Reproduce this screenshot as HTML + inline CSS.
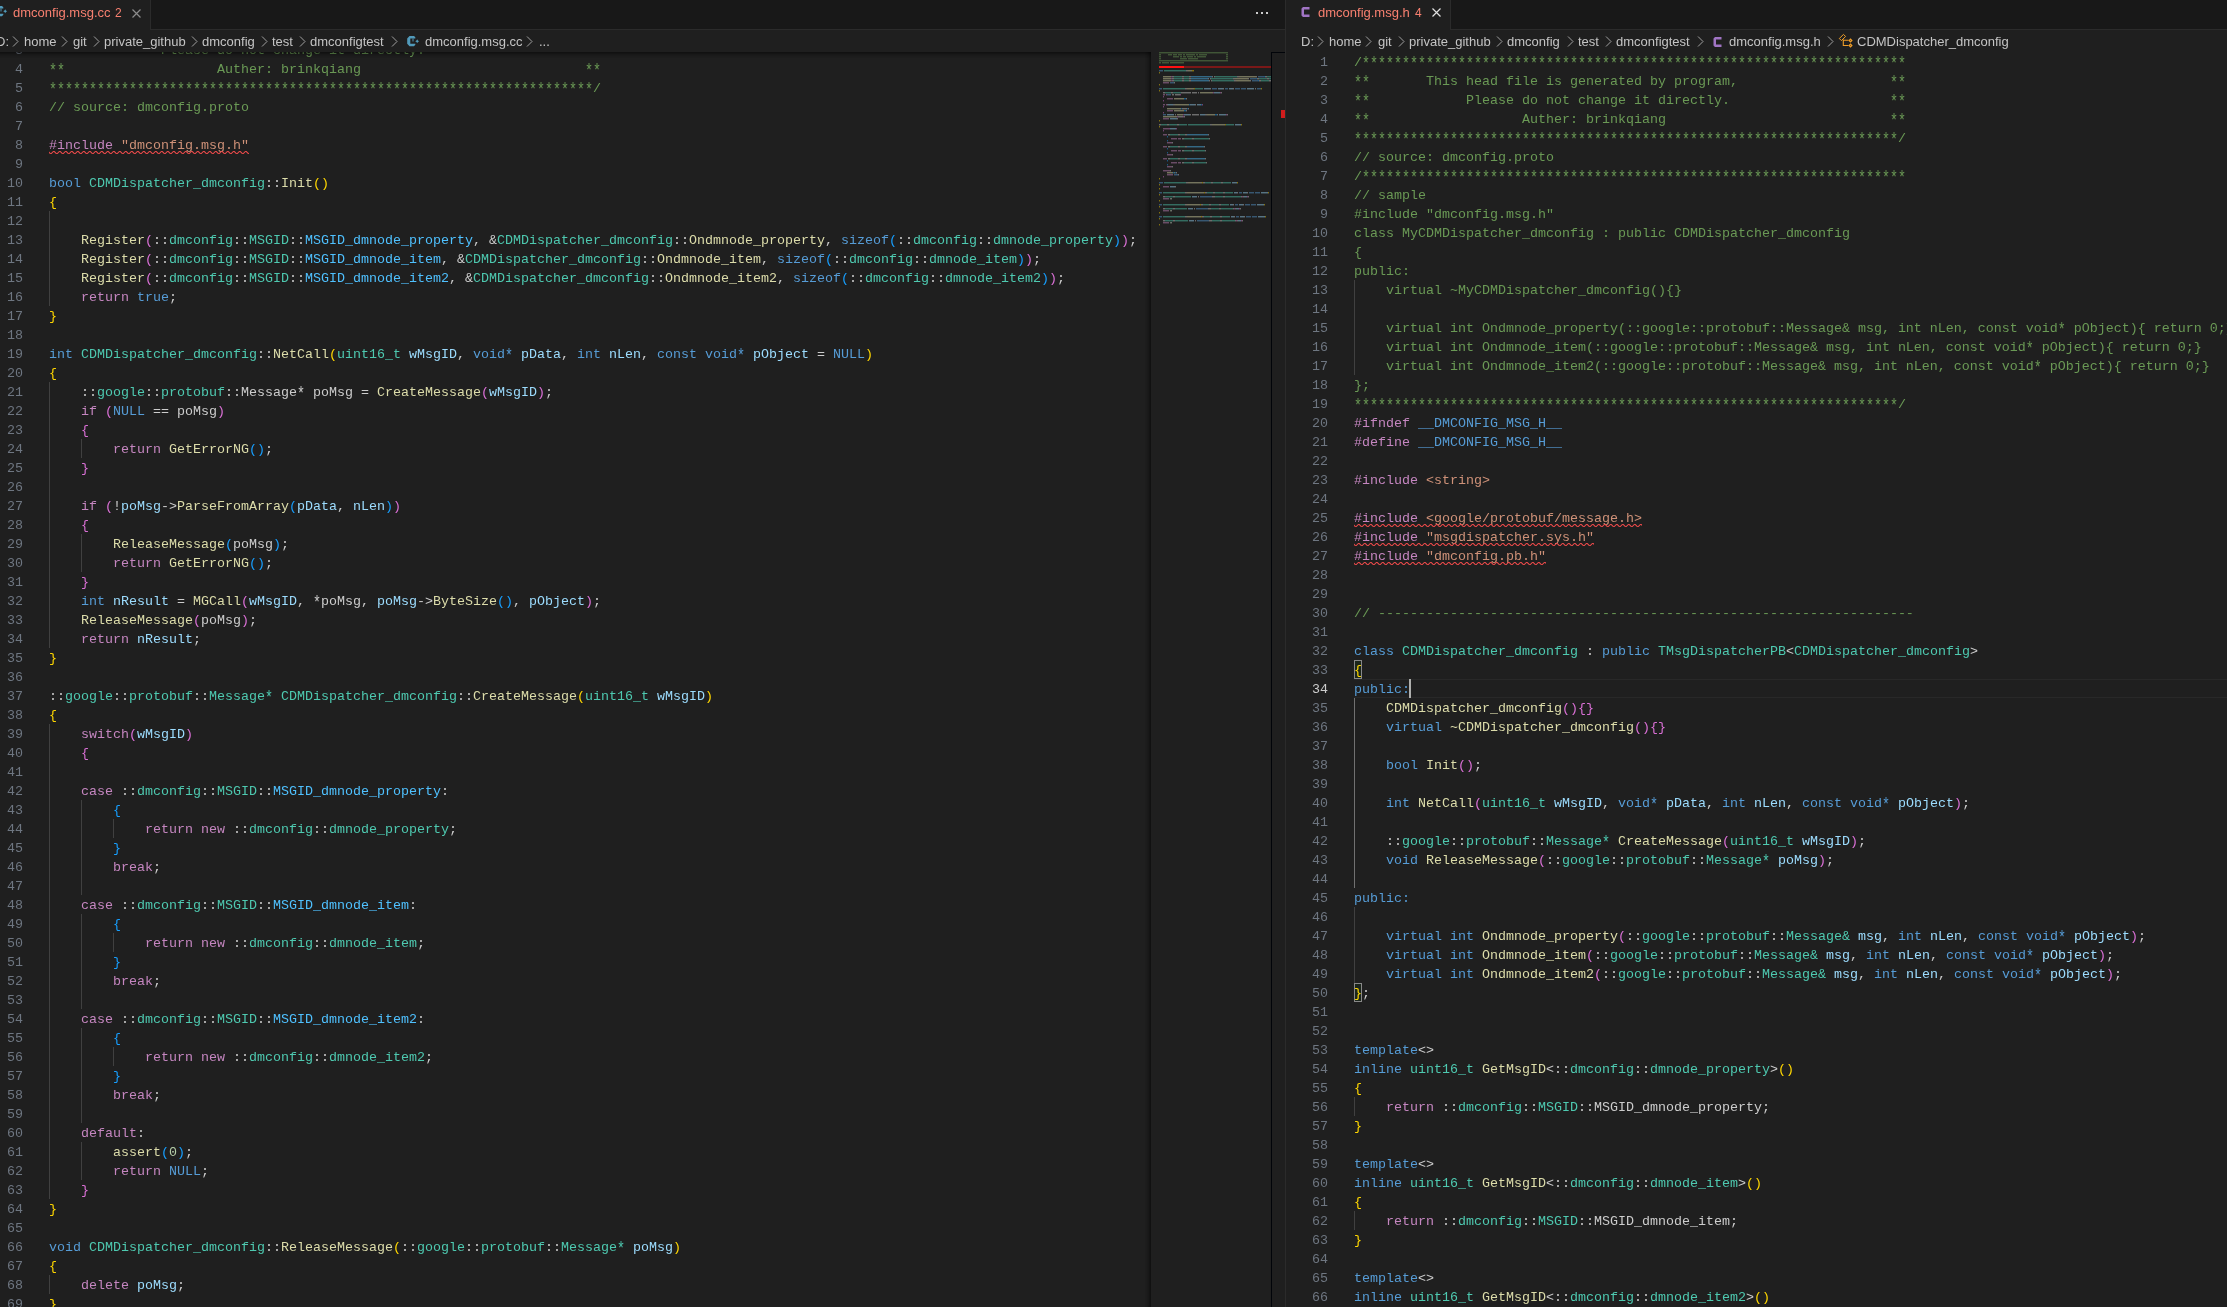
<!DOCTYPE html><html><head><meta charset="utf-8"><style>
*{margin:0;padding:0;box-sizing:border-box}
html,body{width:2227px;height:1307px;overflow:hidden;background:#1f1f1f}
.abs{position:absolute}
.grp{position:absolute;top:0;height:1307px;overflow:hidden;background:#1f1f1f;will-change:transform}
.tabs{position:absolute;left:0;top:0;right:0;height:30px;background:#181818;border-bottom:1px solid #2b2b2b}
.tab{position:absolute;top:0;height:30px;background:#1f1f1f;border-right:1px solid #2b2b2b}
.tl{position:absolute;top:-2px;height:30px;font:13px "Liberation Sans",sans-serif;line-height:30px;color:#f88070;white-space:pre}
.bc{position:absolute;left:0;right:0;top:30px;height:22px;background:#1f1f1f}
.bt{position:absolute;top:1px;height:22px;font:13px "Liberation Sans",sans-serif;line-height:22px;color:#c4c4c4;white-space:pre}
.cicon{font:bold 13px "Liberation Sans",sans-serif;color:#a074c4;line-height:13px}
.ed{position:absolute;left:0;right:0;top:52px;bottom:0;overflow:hidden}
.ln{position:absolute;width:50px;height:19px;text-align:right;font:13.333px "Liberation Mono",monospace;line-height:19px;padding-top:1px;white-space:pre}
.cl{position:absolute;height:19px;font:13.333px "Liberation Mono",monospace;line-height:19px;padding-top:1px;white-space:pre;color:#cccccc}
.g{position:absolute;width:1px;height:19px}
.sq{position:absolute}
.ast{display:inline-block;transform:translateY(2px) scaleY(1.35)}
</style></head><body>
<div class="grp" style="left:-19px;width:1304px">
  <div class="tabs"></div>
  <div class="tab" style="left:0;width:170px">
    <svg class="abs" style="left:14px;top:6px" width="13" height="11" viewBox="0 0 13 11"><path d="M2.5 0 H7 L8.3 1.3 V2.5 H3.3 V7.7 H8.3 V8.8 L7 10.2 H2.5 L0.2 7.8 V2.4 Z" fill="#519aba"/><path d="M5.2 2.5 H6.8 V5.5 H5.2 Z" fill="#519aba" opacity="0.6"/><path d="M10.2 3.3 L10.9 4.6 L12.2 5.3 L10.9 6 L10.2 7.3 L9.5 6 L8.2 5.3 L9.5 4.6 Z" fill="#519aba"/></svg>
    <div class="tl" style="left:32px">dmconfig.msg.cc</div>
    <div class="tl" style="left:134px;font-size:12px">2</div>
    <svg class="abs" style="left:151px;top:9px" width="9" height="9" viewBox="0 0 9 9"><path d="M0.5 0.5 L8.5 8.5 M8.5 0.5 L0.5 8.5" stroke="#8b8b8b" stroke-width="1.2"/></svg>
  </div>
  <div class="abs" style="left:1275px;top:12px;width:2px;height:2px;background:#cccccc"></div>
  <div class="abs" style="left:1280px;top:12px;width:2px;height:2px;background:#cccccc"></div>
  <div class="abs" style="left:1285px;top:12px;width:2px;height:2px;background:#cccccc"></div>
  <div class="bc"><div class="bt" style="left:15px">D:</div><svg class="abs" style="left:31px;top:6px" width="7" height="11" viewBox="0 0 7 11"><path d="M1 0.5 L6 5.5 L1 10.5" fill="none" stroke="#a0a0a0" stroke-width="1"/></svg><div class="bt" style="left:43px">home</div><svg class="abs" style="left:80px;top:6px" width="7" height="11" viewBox="0 0 7 11"><path d="M1 0.5 L6 5.5 L1 10.5" fill="none" stroke="#a0a0a0" stroke-width="1"/></svg><div class="bt" style="left:92px">git</div><svg class="abs" style="left:112px;top:6px" width="7" height="11" viewBox="0 0 7 11"><path d="M1 0.5 L6 5.5 L1 10.5" fill="none" stroke="#a0a0a0" stroke-width="1"/></svg><div class="bt" style="left:123px">private_github</div><svg class="abs" style="left:210px;top:6px" width="7" height="11" viewBox="0 0 7 11"><path d="M1 0.5 L6 5.5 L1 10.5" fill="none" stroke="#a0a0a0" stroke-width="1"/></svg><div class="bt" style="left:221px">dmconfig</div><svg class="abs" style="left:280px;top:6px" width="7" height="11" viewBox="0 0 7 11"><path d="M1 0.5 L6 5.5 L1 10.5" fill="none" stroke="#a0a0a0" stroke-width="1"/></svg><div class="bt" style="left:291px">test</div><svg class="abs" style="left:318px;top:6px" width="7" height="11" viewBox="0 0 7 11"><path d="M1 0.5 L6 5.5 L1 10.5" fill="none" stroke="#a0a0a0" stroke-width="1"/></svg><div class="bt" style="left:329px">dmconfigtest</div><svg class="abs" style="left:410px;top:6px" width="7" height="11" viewBox="0 0 7 11"><path d="M1 0.5 L6 5.5 L1 10.5" fill="none" stroke="#a0a0a0" stroke-width="1"/></svg><svg class="abs" style="left:426px;top:6px" width="13" height="11" viewBox="0 0 13 11"><path d="M2.5 0 H7 L8.3 1.3 V2.5 H3.3 V7.7 H8.3 V8.8 L7 10.2 H2.5 L0.2 7.8 V2.4 Z" fill="#519aba"/><path d="M5.2 2.5 H6.8 V5.5 H5.2 Z" fill="#519aba" opacity="0.6"/><path d="M10.2 3.3 L10.9 4.6 L12.2 5.3 L10.9 6 L10.2 7.3 L9.5 6 L8.2 5.3 L9.5 4.6 Z" fill="#519aba"/></svg><div class="bt" style="left:444px">dmconfig.msg.cc</div><svg class="abs" style="left:545px;top:6px" width="7" height="11" viewBox="0 0 7 11"><path d="M1 0.5 L6 5.5 L1 10.5" fill="none" stroke="#a0a0a0" stroke-width="1"/></svg><div class="bt" style="left:558px">...</div></div>
  <div class="ed">
    <div class="abs" style="left:0;top:0;width:1170px;height:100%;overflow:hidden">
      <div class="ln" style="top:-12px;left:-8px;color:#6e7681">3</div><div class="cl" style="top:-12px;left:68px"><span style="color:#6a9955"><span class="ast">**</span>            Please do not change it directly.                    <span class="ast">**</span></span></div><div class="ln" style="top:7px;left:-8px;color:#6e7681">4</div><div class="cl" style="top:7px;left:68px"><span style="color:#6a9955"><span class="ast">**</span>                   Auther: brinkqiang                            <span class="ast">**</span></span></div><div class="ln" style="top:26px;left:-8px;color:#6e7681">5</div><div class="cl" style="top:26px;left:68px"><span style="color:#6a9955"><span class="ast">********************************************************************</span>/</span></div><div class="ln" style="top:45px;left:-8px;color:#6e7681">6</div><div class="cl" style="top:45px;left:68px"><span style="color:#6a9955">// source: dmconfig.proto</span></div><div class="ln" style="top:64px;left:-8px;color:#6e7681">7</div><div class="cl" style="top:64px;left:68px"></div><div class="ln" style="top:83px;left:-8px;color:#6e7681">8</div><div class="cl" style="top:83px;left:68px"><span style="color:#c586c0">#include</span> <span style="color:#ce9178">&quot;dmconfig.msg.h&quot;</span></div><div class="ln" style="top:102px;left:-8px;color:#6e7681">9</div><div class="cl" style="top:102px;left:68px"></div><div class="ln" style="top:121px;left:-8px;color:#6e7681">10</div><div class="cl" style="top:121px;left:68px"><span style="color:#569cd6">bool </span><span style="color:#4ec9b0">CDMDispatcher_dmconfig</span><span style="color:#cccccc">::</span><span style="color:#dcdcaa">Init</span><span style="color:#ffd700">()</span></div><div class="ln" style="top:140px;left:-8px;color:#6e7681">11</div><div class="cl" style="top:140px;left:68px"><span style="color:#ffd700">{</span></div><div class="ln" style="top:159px;left:-8px;color:#6e7681">12</div><div class="g" style="top:159px;left:68px;background:#404040"></div><div class="cl" style="top:159px;left:68px"></div><div class="ln" style="top:178px;left:-8px;color:#6e7681">13</div><div class="g" style="top:178px;left:68px;background:#404040"></div><div class="cl" style="top:178px;left:68px">    <span style="color:#dcdcaa">Register</span><span style="color:#da70d6">(</span><span style="color:#cccccc">::</span><span style="color:#4ec9b0">dmconfig</span><span style="color:#cccccc">::</span><span style="color:#4ec9b0">MSGID</span><span style="color:#cccccc">::</span><span style="color:#4fc1ff">MSGID_dmnode_property</span><span style="color:#cccccc">, &amp;</span><span style="color:#4ec9b0">CDMDispatcher_dmconfig</span><span style="color:#cccccc">::</span><span style="color:#dcdcaa">Ondmnode_property</span><span style="color:#cccccc">, </span><span style="color:#569cd6">sizeof</span><span style="color:#179fff">(</span><span style="color:#cccccc">::</span><span style="color:#4ec9b0">dmconfig</span><span style="color:#cccccc">::</span><span style="color:#4ec9b0">dmnode_property</span><span style="color:#179fff">)</span><span style="color:#da70d6">)</span><span style="color:#cccccc">;</span></div><div class="ln" style="top:197px;left:-8px;color:#6e7681">14</div><div class="g" style="top:197px;left:68px;background:#404040"></div><div class="cl" style="top:197px;left:68px">    <span style="color:#dcdcaa">Register</span><span style="color:#da70d6">(</span><span style="color:#cccccc">::</span><span style="color:#4ec9b0">dmconfig</span><span style="color:#cccccc">::</span><span style="color:#4ec9b0">MSGID</span><span style="color:#cccccc">::</span><span style="color:#4fc1ff">MSGID_dmnode_item</span><span style="color:#cccccc">, &amp;</span><span style="color:#4ec9b0">CDMDispatcher_dmconfig</span><span style="color:#cccccc">::</span><span style="color:#dcdcaa">Ondmnode_item</span><span style="color:#cccccc">, </span><span style="color:#569cd6">sizeof</span><span style="color:#179fff">(</span><span style="color:#cccccc">::</span><span style="color:#4ec9b0">dmconfig</span><span style="color:#cccccc">::</span><span style="color:#4ec9b0">dmnode_item</span><span style="color:#179fff">)</span><span style="color:#da70d6">)</span><span style="color:#cccccc">;</span></div><div class="ln" style="top:216px;left:-8px;color:#6e7681">15</div><div class="g" style="top:216px;left:68px;background:#404040"></div><div class="cl" style="top:216px;left:68px">    <span style="color:#dcdcaa">Register</span><span style="color:#da70d6">(</span><span style="color:#cccccc">::</span><span style="color:#4ec9b0">dmconfig</span><span style="color:#cccccc">::</span><span style="color:#4ec9b0">MSGID</span><span style="color:#cccccc">::</span><span style="color:#4fc1ff">MSGID_dmnode_item2</span><span style="color:#cccccc">, &amp;</span><span style="color:#4ec9b0">CDMDispatcher_dmconfig</span><span style="color:#cccccc">::</span><span style="color:#dcdcaa">Ondmnode_item2</span><span style="color:#cccccc">, </span><span style="color:#569cd6">sizeof</span><span style="color:#179fff">(</span><span style="color:#cccccc">::</span><span style="color:#4ec9b0">dmconfig</span><span style="color:#cccccc">::</span><span style="color:#4ec9b0">dmnode_item2</span><span style="color:#179fff">)</span><span style="color:#da70d6">)</span><span style="color:#cccccc">;</span></div><div class="ln" style="top:235px;left:-8px;color:#6e7681">16</div><div class="g" style="top:235px;left:68px;background:#404040"></div><div class="cl" style="top:235px;left:68px">    <span style="color:#c586c0">return </span><span style="color:#569cd6">true</span><span style="color:#cccccc">;</span></div><div class="ln" style="top:254px;left:-8px;color:#6e7681">17</div><div class="cl" style="top:254px;left:68px"><span style="color:#ffd700">}</span></div><div class="ln" style="top:273px;left:-8px;color:#6e7681">18</div><div class="cl" style="top:273px;left:68px"></div><div class="ln" style="top:292px;left:-8px;color:#6e7681">19</div><div class="cl" style="top:292px;left:68px"><span style="color:#569cd6">int </span><span style="color:#4ec9b0">CDMDispatcher_dmconfig</span><span style="color:#cccccc">::</span><span style="color:#dcdcaa">NetCall</span><span style="color:#ffd700">(</span><span style="color:#4ec9b0">uint16_t </span><span style="color:#9cdcfe">wMsgID</span><span style="color:#cccccc">, </span><span style="color:#569cd6">void<span class="ast">*</span> </span><span style="color:#9cdcfe">pData</span><span style="color:#cccccc">, </span><span style="color:#569cd6">int </span><span style="color:#9cdcfe">nLen</span><span style="color:#cccccc">, </span><span style="color:#569cd6">const void<span class="ast">*</span> </span><span style="color:#9cdcfe">pObject </span><span style="color:#cccccc">= </span><span style="color:#569cd6">NULL</span><span style="color:#ffd700">)</span></div><div class="ln" style="top:311px;left:-8px;color:#6e7681">20</div><div class="cl" style="top:311px;left:68px"><span style="color:#ffd700">{</span></div><div class="ln" style="top:330px;left:-8px;color:#6e7681">21</div><div class="g" style="top:330px;left:68px;background:#404040"></div><div class="cl" style="top:330px;left:68px"><span style="color:#cccccc">    ::</span><span style="color:#4ec9b0">google</span><span style="color:#cccccc">::</span><span style="color:#4ec9b0">protobuf</span><span style="color:#cccccc">::Message<span class="ast">*</span> poMsg = </span><span style="color:#dcdcaa">CreateMessage</span><span style="color:#da70d6">(</span><span style="color:#9cdcfe">wMsgID</span><span style="color:#da70d6">)</span><span style="color:#cccccc">;</span></div><div class="ln" style="top:349px;left:-8px;color:#6e7681">22</div><div class="g" style="top:349px;left:68px;background:#404040"></div><div class="cl" style="top:349px;left:68px">    <span style="color:#c586c0">if </span><span style="color:#da70d6">(</span><span style="color:#569cd6">NULL </span><span style="color:#cccccc">== poMsg</span><span style="color:#da70d6">)</span></div><div class="ln" style="top:368px;left:-8px;color:#6e7681">23</div><div class="g" style="top:368px;left:68px;background:#404040"></div><div class="cl" style="top:368px;left:68px">    <span style="color:#da70d6">{</span></div><div class="ln" style="top:387px;left:-8px;color:#6e7681">24</div><div class="g" style="top:387px;left:68px;background:#404040"></div><div class="g" style="top:387px;left:100px;background:#404040"></div><div class="cl" style="top:387px;left:68px">        <span style="color:#c586c0">return </span><span style="color:#dcdcaa">GetErrorNG</span><span style="color:#179fff">()</span><span style="color:#cccccc">;</span></div><div class="ln" style="top:406px;left:-8px;color:#6e7681">25</div><div class="g" style="top:406px;left:68px;background:#404040"></div><div class="cl" style="top:406px;left:68px">    <span style="color:#da70d6">}</span></div><div class="ln" style="top:425px;left:-8px;color:#6e7681">26</div><div class="g" style="top:425px;left:68px;background:#404040"></div><div class="cl" style="top:425px;left:68px"></div><div class="ln" style="top:444px;left:-8px;color:#6e7681">27</div><div class="g" style="top:444px;left:68px;background:#404040"></div><div class="cl" style="top:444px;left:68px">    <span style="color:#c586c0">if </span><span style="color:#da70d6">(</span><span style="color:#cccccc">!</span><span style="color:#9cdcfe">poMsg</span><span style="color:#cccccc">-&gt;</span><span style="color:#dcdcaa">ParseFromArray</span><span style="color:#179fff">(</span><span style="color:#9cdcfe">pData</span><span style="color:#cccccc">, </span><span style="color:#9cdcfe">nLen</span><span style="color:#179fff">)</span><span style="color:#da70d6">)</span></div><div class="ln" style="top:463px;left:-8px;color:#6e7681">28</div><div class="g" style="top:463px;left:68px;background:#404040"></div><div class="cl" style="top:463px;left:68px">    <span style="color:#da70d6">{</span></div><div class="ln" style="top:482px;left:-8px;color:#6e7681">29</div><div class="g" style="top:482px;left:68px;background:#404040"></div><div class="g" style="top:482px;left:100px;background:#404040"></div><div class="cl" style="top:482px;left:68px">        <span style="color:#dcdcaa">ReleaseMessage</span><span style="color:#179fff">(</span><span style="color:#cccccc">poMsg</span><span style="color:#179fff">)</span><span style="color:#cccccc">;</span></div><div class="ln" style="top:501px;left:-8px;color:#6e7681">30</div><div class="g" style="top:501px;left:68px;background:#404040"></div><div class="g" style="top:501px;left:100px;background:#404040"></div><div class="cl" style="top:501px;left:68px">        <span style="color:#c586c0">return </span><span style="color:#dcdcaa">GetErrorNG</span><span style="color:#179fff">()</span><span style="color:#cccccc">;</span></div><div class="ln" style="top:520px;left:-8px;color:#6e7681">31</div><div class="g" style="top:520px;left:68px;background:#404040"></div><div class="cl" style="top:520px;left:68px">    <span style="color:#da70d6">}</span></div><div class="ln" style="top:539px;left:-8px;color:#6e7681">32</div><div class="g" style="top:539px;left:68px;background:#404040"></div><div class="cl" style="top:539px;left:68px">    <span style="color:#569cd6">int </span><span style="color:#9cdcfe">nResult </span><span style="color:#cccccc">= </span><span style="color:#dcdcaa">MGCall</span><span style="color:#da70d6">(</span><span style="color:#9cdcfe">wMsgID</span><span style="color:#cccccc">, <span class="ast">*</span>poMsg, </span><span style="color:#9cdcfe">poMsg</span><span style="color:#cccccc">-&gt;</span><span style="color:#dcdcaa">ByteSize</span><span style="color:#179fff">()</span><span style="color:#cccccc">, </span><span style="color:#9cdcfe">pObject</span><span style="color:#da70d6">)</span><span style="color:#cccccc">;</span></div><div class="ln" style="top:558px;left:-8px;color:#6e7681">33</div><div class="g" style="top:558px;left:68px;background:#404040"></div><div class="cl" style="top:558px;left:68px">    <span style="color:#dcdcaa">ReleaseMessage</span><span style="color:#da70d6">(</span><span style="color:#cccccc">poMsg</span><span style="color:#da70d6">)</span><span style="color:#cccccc">;</span></div><div class="ln" style="top:577px;left:-8px;color:#6e7681">34</div><div class="g" style="top:577px;left:68px;background:#404040"></div><div class="cl" style="top:577px;left:68px">    <span style="color:#c586c0">return </span><span style="color:#9cdcfe">nResult</span><span style="color:#cccccc">;</span></div><div class="ln" style="top:596px;left:-8px;color:#6e7681">35</div><div class="cl" style="top:596px;left:68px"><span style="color:#ffd700">}</span></div><div class="ln" style="top:615px;left:-8px;color:#6e7681">36</div><div class="cl" style="top:615px;left:68px"></div><div class="ln" style="top:634px;left:-8px;color:#6e7681">37</div><div class="cl" style="top:634px;left:68px"><span style="color:#cccccc">::</span><span style="color:#4ec9b0">google</span><span style="color:#cccccc">::</span><span style="color:#4ec9b0">protobuf</span><span style="color:#cccccc">::</span><span style="color:#4ec9b0">Message<span class="ast">*</span> CDMDispatcher_dmconfig</span><span style="color:#cccccc">::</span><span style="color:#dcdcaa">CreateMessage</span><span style="color:#ffd700">(</span><span style="color:#4ec9b0">uint16_t </span><span style="color:#9cdcfe">wMsgID</span><span style="color:#ffd700">)</span></div><div class="ln" style="top:653px;left:-8px;color:#6e7681">38</div><div class="cl" style="top:653px;left:68px"><span style="color:#ffd700">{</span></div><div class="ln" style="top:672px;left:-8px;color:#6e7681">39</div><div class="g" style="top:672px;left:68px;background:#404040"></div><div class="cl" style="top:672px;left:68px">    <span style="color:#c586c0">switch</span><span style="color:#da70d6">(</span><span style="color:#9cdcfe">wMsgID</span><span style="color:#da70d6">)</span></div><div class="ln" style="top:691px;left:-8px;color:#6e7681">40</div><div class="g" style="top:691px;left:68px;background:#404040"></div><div class="cl" style="top:691px;left:68px">    <span style="color:#da70d6">{</span></div><div class="ln" style="top:710px;left:-8px;color:#6e7681">41</div><div class="g" style="top:710px;left:68px;background:#404040"></div><div class="cl" style="top:710px;left:68px"></div><div class="ln" style="top:729px;left:-8px;color:#6e7681">42</div><div class="g" style="top:729px;left:68px;background:#404040"></div><div class="cl" style="top:729px;left:68px">    <span style="color:#c586c0">case </span><span style="color:#cccccc">::</span><span style="color:#4ec9b0">dmconfig</span><span style="color:#cccccc">::</span><span style="color:#4ec9b0">MSGID</span><span style="color:#cccccc">::</span><span style="color:#4fc1ff">MSGID_dmnode_property</span><span style="color:#cccccc">:</span></div><div class="ln" style="top:748px;left:-8px;color:#6e7681">43</div><div class="g" style="top:748px;left:68px;background:#404040"></div><div class="g" style="top:748px;left:100px;background:#404040"></div><div class="cl" style="top:748px;left:68px">        <span style="color:#179fff">{</span></div><div class="ln" style="top:767px;left:-8px;color:#6e7681">44</div><div class="g" style="top:767px;left:68px;background:#404040"></div><div class="g" style="top:767px;left:100px;background:#404040"></div><div class="g" style="top:767px;left:132px;background:#404040"></div><div class="cl" style="top:767px;left:68px">            <span style="color:#c586c0">return new </span><span style="color:#cccccc">::</span><span style="color:#4ec9b0">dmconfig</span><span style="color:#cccccc">::</span><span style="color:#4ec9b0">dmnode_property</span><span style="color:#cccccc">;</span></div><div class="ln" style="top:786px;left:-8px;color:#6e7681">45</div><div class="g" style="top:786px;left:68px;background:#404040"></div><div class="g" style="top:786px;left:100px;background:#404040"></div><div class="cl" style="top:786px;left:68px">        <span style="color:#179fff">}</span></div><div class="ln" style="top:805px;left:-8px;color:#6e7681">46</div><div class="g" style="top:805px;left:68px;background:#404040"></div><div class="g" style="top:805px;left:100px;background:#404040"></div><div class="cl" style="top:805px;left:68px">        <span style="color:#c586c0">break</span><span style="color:#cccccc">;</span></div><div class="ln" style="top:824px;left:-8px;color:#6e7681">47</div><div class="g" style="top:824px;left:68px;background:#404040"></div><div class="g" style="top:824px;left:100px;background:#404040"></div><div class="cl" style="top:824px;left:68px"></div><div class="ln" style="top:843px;left:-8px;color:#6e7681">48</div><div class="g" style="top:843px;left:68px;background:#404040"></div><div class="cl" style="top:843px;left:68px">    <span style="color:#c586c0">case </span><span style="color:#cccccc">::</span><span style="color:#4ec9b0">dmconfig</span><span style="color:#cccccc">::</span><span style="color:#4ec9b0">MSGID</span><span style="color:#cccccc">::</span><span style="color:#4fc1ff">MSGID_dmnode_item</span><span style="color:#cccccc">:</span></div><div class="ln" style="top:862px;left:-8px;color:#6e7681">49</div><div class="g" style="top:862px;left:68px;background:#404040"></div><div class="g" style="top:862px;left:100px;background:#404040"></div><div class="cl" style="top:862px;left:68px">        <span style="color:#179fff">{</span></div><div class="ln" style="top:881px;left:-8px;color:#6e7681">50</div><div class="g" style="top:881px;left:68px;background:#404040"></div><div class="g" style="top:881px;left:100px;background:#404040"></div><div class="g" style="top:881px;left:132px;background:#404040"></div><div class="cl" style="top:881px;left:68px">            <span style="color:#c586c0">return new </span><span style="color:#cccccc">::</span><span style="color:#4ec9b0">dmconfig</span><span style="color:#cccccc">::</span><span style="color:#4ec9b0">dmnode_item</span><span style="color:#cccccc">;</span></div><div class="ln" style="top:900px;left:-8px;color:#6e7681">51</div><div class="g" style="top:900px;left:68px;background:#404040"></div><div class="g" style="top:900px;left:100px;background:#404040"></div><div class="cl" style="top:900px;left:68px">        <span style="color:#179fff">}</span></div><div class="ln" style="top:919px;left:-8px;color:#6e7681">52</div><div class="g" style="top:919px;left:68px;background:#404040"></div><div class="g" style="top:919px;left:100px;background:#404040"></div><div class="cl" style="top:919px;left:68px">        <span style="color:#c586c0">break</span><span style="color:#cccccc">;</span></div><div class="ln" style="top:938px;left:-8px;color:#6e7681">53</div><div class="g" style="top:938px;left:68px;background:#404040"></div><div class="g" style="top:938px;left:100px;background:#404040"></div><div class="cl" style="top:938px;left:68px"></div><div class="ln" style="top:957px;left:-8px;color:#6e7681">54</div><div class="g" style="top:957px;left:68px;background:#404040"></div><div class="cl" style="top:957px;left:68px">    <span style="color:#c586c0">case </span><span style="color:#cccccc">::</span><span style="color:#4ec9b0">dmconfig</span><span style="color:#cccccc">::</span><span style="color:#4ec9b0">MSGID</span><span style="color:#cccccc">::</span><span style="color:#4fc1ff">MSGID_dmnode_item2</span><span style="color:#cccccc">:</span></div><div class="ln" style="top:976px;left:-8px;color:#6e7681">55</div><div class="g" style="top:976px;left:68px;background:#404040"></div><div class="g" style="top:976px;left:100px;background:#404040"></div><div class="cl" style="top:976px;left:68px">        <span style="color:#179fff">{</span></div><div class="ln" style="top:995px;left:-8px;color:#6e7681">56</div><div class="g" style="top:995px;left:68px;background:#404040"></div><div class="g" style="top:995px;left:100px;background:#404040"></div><div class="g" style="top:995px;left:132px;background:#404040"></div><div class="cl" style="top:995px;left:68px">            <span style="color:#c586c0">return new </span><span style="color:#cccccc">::</span><span style="color:#4ec9b0">dmconfig</span><span style="color:#cccccc">::</span><span style="color:#4ec9b0">dmnode_item2</span><span style="color:#cccccc">;</span></div><div class="ln" style="top:1014px;left:-8px;color:#6e7681">57</div><div class="g" style="top:1014px;left:68px;background:#404040"></div><div class="g" style="top:1014px;left:100px;background:#404040"></div><div class="cl" style="top:1014px;left:68px">        <span style="color:#179fff">}</span></div><div class="ln" style="top:1033px;left:-8px;color:#6e7681">58</div><div class="g" style="top:1033px;left:68px;background:#404040"></div><div class="g" style="top:1033px;left:100px;background:#404040"></div><div class="cl" style="top:1033px;left:68px">        <span style="color:#c586c0">break</span><span style="color:#cccccc">;</span></div><div class="ln" style="top:1052px;left:-8px;color:#6e7681">59</div><div class="g" style="top:1052px;left:68px;background:#404040"></div><div class="g" style="top:1052px;left:100px;background:#404040"></div><div class="cl" style="top:1052px;left:68px"></div><div class="ln" style="top:1071px;left:-8px;color:#6e7681">60</div><div class="g" style="top:1071px;left:68px;background:#404040"></div><div class="cl" style="top:1071px;left:68px">    <span style="color:#c586c0">default</span><span style="color:#cccccc">:</span></div><div class="ln" style="top:1090px;left:-8px;color:#6e7681">61</div><div class="g" style="top:1090px;left:68px;background:#404040"></div><div class="g" style="top:1090px;left:100px;background:#404040"></div><div class="cl" style="top:1090px;left:68px">        <span style="color:#dcdcaa">assert</span><span style="color:#179fff">(</span><span style="color:#b5cea8">0</span><span style="color:#179fff">)</span><span style="color:#cccccc">;</span></div><div class="ln" style="top:1109px;left:-8px;color:#6e7681">62</div><div class="g" style="top:1109px;left:68px;background:#404040"></div><div class="g" style="top:1109px;left:100px;background:#404040"></div><div class="cl" style="top:1109px;left:68px">        <span style="color:#c586c0">return </span><span style="color:#569cd6">NULL</span><span style="color:#cccccc">;</span></div><div class="ln" style="top:1128px;left:-8px;color:#6e7681">63</div><div class="g" style="top:1128px;left:68px;background:#404040"></div><div class="cl" style="top:1128px;left:68px">    <span style="color:#da70d6">}</span></div><div class="ln" style="top:1147px;left:-8px;color:#6e7681">64</div><div class="cl" style="top:1147px;left:68px"><span style="color:#ffd700">}</span></div><div class="ln" style="top:1166px;left:-8px;color:#6e7681">65</div><div class="cl" style="top:1166px;left:68px"></div><div class="ln" style="top:1185px;left:-8px;color:#6e7681">66</div><div class="cl" style="top:1185px;left:68px"><span style="color:#569cd6">void </span><span style="color:#4ec9b0">CDMDispatcher_dmconfig</span><span style="color:#cccccc">::</span><span style="color:#dcdcaa">ReleaseMessage</span><span style="color:#ffd700">(</span><span style="color:#cccccc">::</span><span style="color:#4ec9b0">google</span><span style="color:#cccccc">::</span><span style="color:#4ec9b0">protobuf</span><span style="color:#cccccc">::</span><span style="color:#4ec9b0">Message<span class="ast">*</span> </span><span style="color:#9cdcfe">poMsg</span><span style="color:#ffd700">)</span></div><div class="ln" style="top:1204px;left:-8px;color:#6e7681">67</div><div class="cl" style="top:1204px;left:68px"><span style="color:#ffd700">{</span></div><div class="ln" style="top:1223px;left:-8px;color:#6e7681">68</div><div class="g" style="top:1223px;left:68px;background:#404040"></div><div class="cl" style="top:1223px;left:68px">    <span style="color:#c586c0">delete </span><span style="color:#9cdcfe">poMsg</span><span style="color:#cccccc">;</span></div><div class="ln" style="top:1242px;left:-8px;color:#6e7681">69</div><div class="cl" style="top:1242px;left:68px"><span style="color:#ffd700">}</span></div>
      <svg class="sq" style="left:68px;top:99px" width="200" height="3"><g fill="#f14c4c"><polygon points="5.5,0.0 2.5,3.0 1.1,3.0 4.1,0.0"/><polygon points="4.0,0.0 6.0,2.0 6.0,0.6 5.4,0.0"/><polygon points="0.0,2.0 1.0,3.0 2.4,3.0 0.0,0.6"/><polygon points="11.5,0.0 8.5,3.0 7.1,3.0 10.1,0.0"/><polygon points="10.0,0.0 12.0,2.0 12.0,0.6 11.4,0.0"/><polygon points="6.0,2.0 7.0,3.0 8.4,3.0 6.0,0.6"/><polygon points="17.5,0.0 14.5,3.0 13.1,3.0 16.1,0.0"/><polygon points="16.0,0.0 18.0,2.0 18.0,0.6 17.4,0.0"/><polygon points="12.0,2.0 13.0,3.0 14.4,3.0 12.0,0.6"/><polygon points="23.5,0.0 20.5,3.0 19.1,3.0 22.1,0.0"/><polygon points="22.0,0.0 24.0,2.0 24.0,0.6 23.4,0.0"/><polygon points="18.0,2.0 19.0,3.0 20.4,3.0 18.0,0.6"/><polygon points="29.5,0.0 26.5,3.0 25.1,3.0 28.1,0.0"/><polygon points="28.0,0.0 30.0,2.0 30.0,0.6 29.4,0.0"/><polygon points="24.0,2.0 25.0,3.0 26.4,3.0 24.0,0.6"/><polygon points="35.5,0.0 32.5,3.0 31.1,3.0 34.1,0.0"/><polygon points="34.0,0.0 36.0,2.0 36.0,0.6 35.4,0.0"/><polygon points="30.0,2.0 31.0,3.0 32.4,3.0 30.0,0.6"/><polygon points="41.5,0.0 38.5,3.0 37.1,3.0 40.1,0.0"/><polygon points="40.0,0.0 42.0,2.0 42.0,0.6 41.4,0.0"/><polygon points="36.0,2.0 37.0,3.0 38.4,3.0 36.0,0.6"/><polygon points="47.5,0.0 44.5,3.0 43.1,3.0 46.1,0.0"/><polygon points="46.0,0.0 48.0,2.0 48.0,0.6 47.4,0.0"/><polygon points="42.0,2.0 43.0,3.0 44.4,3.0 42.0,0.6"/><polygon points="53.5,0.0 50.5,3.0 49.1,3.0 52.1,0.0"/><polygon points="52.0,0.0 54.0,2.0 54.0,0.6 53.4,0.0"/><polygon points="48.0,2.0 49.0,3.0 50.4,3.0 48.0,0.6"/><polygon points="59.5,0.0 56.5,3.0 55.1,3.0 58.1,0.0"/><polygon points="58.0,0.0 60.0,2.0 60.0,0.6 59.4,0.0"/><polygon points="54.0,2.0 55.0,3.0 56.4,3.0 54.0,0.6"/><polygon points="65.5,0.0 62.5,3.0 61.1,3.0 64.1,0.0"/><polygon points="64.0,0.0 66.0,2.0 66.0,0.6 65.4,0.0"/><polygon points="60.0,2.0 61.0,3.0 62.4,3.0 60.0,0.6"/><polygon points="71.5,0.0 68.5,3.0 67.1,3.0 70.1,0.0"/><polygon points="70.0,0.0 72.0,2.0 72.0,0.6 71.4,0.0"/><polygon points="66.0,2.0 67.0,3.0 68.4,3.0 66.0,0.6"/><polygon points="77.5,0.0 74.5,3.0 73.1,3.0 76.1,0.0"/><polygon points="76.0,0.0 78.0,2.0 78.0,0.6 77.4,0.0"/><polygon points="72.0,2.0 73.0,3.0 74.4,3.0 72.0,0.6"/><polygon points="83.5,0.0 80.5,3.0 79.1,3.0 82.1,0.0"/><polygon points="82.0,0.0 84.0,2.0 84.0,0.6 83.4,0.0"/><polygon points="78.0,2.0 79.0,3.0 80.4,3.0 78.0,0.6"/><polygon points="89.5,0.0 86.5,3.0 85.1,3.0 88.1,0.0"/><polygon points="88.0,0.0 90.0,2.0 90.0,0.6 89.4,0.0"/><polygon points="84.0,2.0 85.0,3.0 86.4,3.0 84.0,0.6"/><polygon points="95.5,0.0 92.5,3.0 91.1,3.0 94.1,0.0"/><polygon points="94.0,0.0 96.0,2.0 96.0,0.6 95.4,0.0"/><polygon points="90.0,2.0 91.0,3.0 92.4,3.0 90.0,0.6"/><polygon points="101.5,0.0 98.5,3.0 97.1,3.0 100.1,0.0"/><polygon points="100.0,0.0 102.0,2.0 102.0,0.6 101.4,0.0"/><polygon points="96.0,2.0 97.0,3.0 98.4,3.0 96.0,0.6"/><polygon points="107.5,0.0 104.5,3.0 103.1,3.0 106.1,0.0"/><polygon points="106.0,0.0 108.0,2.0 108.0,0.6 107.4,0.0"/><polygon points="102.0,2.0 103.0,3.0 104.4,3.0 102.0,0.6"/><polygon points="113.5,0.0 110.5,3.0 109.1,3.0 112.1,0.0"/><polygon points="112.0,0.0 114.0,2.0 114.0,0.6 113.4,0.0"/><polygon points="108.0,2.0 109.0,3.0 110.4,3.0 108.0,0.6"/><polygon points="119.5,0.0 116.5,3.0 115.1,3.0 118.1,0.0"/><polygon points="118.0,0.0 120.0,2.0 120.0,0.6 119.4,0.0"/><polygon points="114.0,2.0 115.0,3.0 116.4,3.0 114.0,0.6"/><polygon points="125.5,0.0 122.5,3.0 121.1,3.0 124.1,0.0"/><polygon points="124.0,0.0 126.0,2.0 126.0,0.6 125.4,0.0"/><polygon points="120.0,2.0 121.0,3.0 122.4,3.0 120.0,0.6"/><polygon points="131.5,0.0 128.5,3.0 127.1,3.0 130.1,0.0"/><polygon points="130.0,0.0 132.0,2.0 132.0,0.6 131.4,0.0"/><polygon points="126.0,2.0 127.0,3.0 128.4,3.0 126.0,0.6"/><polygon points="137.5,0.0 134.5,3.0 133.1,3.0 136.1,0.0"/><polygon points="136.0,0.0 138.0,2.0 138.0,0.6 137.4,0.0"/><polygon points="132.0,2.0 133.0,3.0 134.4,3.0 132.0,0.6"/><polygon points="143.5,0.0 140.5,3.0 139.1,3.0 142.1,0.0"/><polygon points="142.0,0.0 144.0,2.0 144.0,0.6 143.4,0.0"/><polygon points="138.0,2.0 139.0,3.0 140.4,3.0 138.0,0.6"/><polygon points="149.5,0.0 146.5,3.0 145.1,3.0 148.1,0.0"/><polygon points="148.0,0.0 150.0,2.0 150.0,0.6 149.4,0.0"/><polygon points="144.0,2.0 145.0,3.0 146.4,3.0 144.0,0.6"/><polygon points="155.5,0.0 152.5,3.0 151.1,3.0 154.1,0.0"/><polygon points="154.0,0.0 156.0,2.0 156.0,0.6 155.4,0.0"/><polygon points="150.0,2.0 151.0,3.0 152.4,3.0 150.0,0.6"/><polygon points="161.5,0.0 158.5,3.0 157.1,3.0 160.1,0.0"/><polygon points="160.0,0.0 162.0,2.0 162.0,0.6 161.4,0.0"/><polygon points="156.0,2.0 157.0,3.0 158.4,3.0 156.0,0.6"/><polygon points="167.5,0.0 164.5,3.0 163.1,3.0 166.1,0.0"/><polygon points="166.0,0.0 168.0,2.0 168.0,0.6 167.4,0.0"/><polygon points="162.0,2.0 163.0,3.0 164.4,3.0 162.0,0.6"/><polygon points="173.5,0.0 170.5,3.0 169.1,3.0 172.1,0.0"/><polygon points="172.0,0.0 174.0,2.0 174.0,0.6 173.4,0.0"/><polygon points="168.0,2.0 169.0,3.0 170.4,3.0 168.0,0.6"/><polygon points="179.5,0.0 176.5,3.0 175.1,3.0 178.1,0.0"/><polygon points="178.0,0.0 180.0,2.0 180.0,0.6 179.4,0.0"/><polygon points="174.0,2.0 175.0,3.0 176.4,3.0 174.0,0.6"/><polygon points="185.5,0.0 182.5,3.0 181.1,3.0 184.1,0.0"/><polygon points="184.0,0.0 186.0,2.0 186.0,0.6 185.4,0.0"/><polygon points="180.0,2.0 181.0,3.0 182.4,3.0 180.0,0.6"/><polygon points="191.5,0.0 188.5,3.0 187.1,3.0 190.1,0.0"/><polygon points="190.0,0.0 192.0,2.0 192.0,0.6 191.4,0.0"/><polygon points="186.0,2.0 187.0,3.0 188.4,3.0 186.0,0.6"/><polygon points="197.5,0.0 194.5,3.0 193.1,3.0 196.1,0.0"/><polygon points="196.0,0.0 198.0,2.0 198.0,0.6 197.4,0.0"/><polygon points="192.0,2.0 193.0,3.0 194.4,3.0 192.0,0.6"/><polygon points="203.5,0.0 200.5,3.0 199.1,3.0 202.1,0.0"/><polygon points="202.0,0.0 204.0,2.0 204.0,0.6 203.4,0.0"/><polygon points="198.0,2.0 199.0,3.0 200.4,3.0 198.0,0.6"/></g></svg>
    </div>
    <div class="abs" style="left:1170px;top:0;width:120px;height:100%;overflow:hidden"><svg width="120" height="1255" style="position:absolute;left:8px;top:0;opacity:0.45"><rect x="0" y="0" width="69" height="1" fill="#6a9955"/><rect x="0" y="1" width="69" height="1" fill="#6a9955" fill-opacity="0.45"/><rect x="0" y="2" width="2" height="1" fill="#6a9955"/><rect x="0" y="3" width="2" height="1" fill="#6a9955" fill-opacity="0.45"/><rect x="9" y="2" width="4" height="1" fill="#6a9955"/><rect x="9" y="3" width="4" height="1" fill="#6a9955" fill-opacity="0.45"/><rect x="14" y="2" width="4" height="1" fill="#6a9955"/><rect x="14" y="3" width="4" height="1" fill="#6a9955" fill-opacity="0.45"/><rect x="19" y="2" width="4" height="1" fill="#6a9955"/><rect x="19" y="3" width="4" height="1" fill="#6a9955" fill-opacity="0.45"/><rect x="24" y="2" width="2" height="1" fill="#6a9955"/><rect x="24" y="3" width="2" height="1" fill="#6a9955" fill-opacity="0.45"/><rect x="27" y="2" width="9" height="1" fill="#6a9955"/><rect x="27" y="3" width="9" height="1" fill="#6a9955" fill-opacity="0.45"/><rect x="37" y="2" width="2" height="1" fill="#6a9955"/><rect x="37" y="3" width="2" height="1" fill="#6a9955" fill-opacity="0.45"/><rect x="40" y="2" width="8" height="1" fill="#6a9955"/><rect x="40" y="3" width="8" height="1" fill="#6a9955" fill-opacity="0.45"/><rect x="67" y="2" width="2" height="1" fill="#6a9955"/><rect x="67" y="3" width="2" height="1" fill="#6a9955" fill-opacity="0.45"/><rect x="0" y="4" width="2" height="1" fill="#6a9955"/><rect x="0" y="5" width="2" height="1" fill="#6a9955" fill-opacity="0.45"/><rect x="14" y="4" width="6" height="1" fill="#6a9955"/><rect x="14" y="5" width="6" height="1" fill="#6a9955" fill-opacity="0.45"/><rect x="21" y="4" width="2" height="1" fill="#6a9955"/><rect x="21" y="5" width="2" height="1" fill="#6a9955" fill-opacity="0.45"/><rect x="24" y="4" width="3" height="1" fill="#6a9955"/><rect x="24" y="5" width="3" height="1" fill="#6a9955" fill-opacity="0.45"/><rect x="28" y="4" width="6" height="1" fill="#6a9955"/><rect x="28" y="5" width="6" height="1" fill="#6a9955" fill-opacity="0.45"/><rect x="35" y="4" width="2" height="1" fill="#6a9955"/><rect x="35" y="5" width="2" height="1" fill="#6a9955" fill-opacity="0.45"/><rect x="38" y="4" width="9" height="1" fill="#6a9955"/><rect x="38" y="5" width="9" height="1" fill="#6a9955" fill-opacity="0.45"/><rect x="67" y="4" width="2" height="1" fill="#6a9955"/><rect x="67" y="5" width="2" height="1" fill="#6a9955" fill-opacity="0.45"/><rect x="0" y="6" width="2" height="1" fill="#6a9955"/><rect x="0" y="7" width="2" height="1" fill="#6a9955" fill-opacity="0.45"/><rect x="21" y="6" width="7" height="1" fill="#6a9955"/><rect x="21" y="7" width="7" height="1" fill="#6a9955" fill-opacity="0.45"/><rect x="29" y="6" width="10" height="1" fill="#6a9955"/><rect x="29" y="7" width="10" height="1" fill="#6a9955" fill-opacity="0.45"/><rect x="67" y="6" width="2" height="1" fill="#6a9955"/><rect x="67" y="7" width="2" height="1" fill="#6a9955" fill-opacity="0.45"/><rect x="0" y="8" width="69" height="1" fill="#6a9955"/><rect x="0" y="9" width="69" height="1" fill="#6a9955" fill-opacity="0.45"/><rect x="0" y="10" width="2" height="1" fill="#6a9955"/><rect x="0" y="11" width="2" height="1" fill="#6a9955" fill-opacity="0.45"/><rect x="3" y="10" width="7" height="1" fill="#6a9955"/><rect x="3" y="11" width="7" height="1" fill="#6a9955" fill-opacity="0.45"/><rect x="11" y="10" width="14" height="1" fill="#6a9955"/><rect x="11" y="11" width="14" height="1" fill="#6a9955" fill-opacity="0.45"/><rect x="0" y="14" width="8" height="1" fill="#c586c0"/><rect x="0" y="15" width="8" height="1" fill="#c586c0" fill-opacity="0.45"/><rect x="9" y="14" width="16" height="1" fill="#ce9178"/><rect x="9" y="15" width="16" height="1" fill="#ce9178" fill-opacity="0.45"/><rect x="0" y="18" width="4" height="1" fill="#569cd6"/><rect x="0" y="19" width="4" height="1" fill="#569cd6" fill-opacity="0.45"/><rect x="5" y="18" width="22" height="1" fill="#4ec9b0"/><rect x="5" y="19" width="22" height="1" fill="#4ec9b0" fill-opacity="0.45"/><rect x="27" y="18" width="2" height="1" fill="#cccccc"/><rect x="27" y="19" width="2" height="1" fill="#cccccc" fill-opacity="0.45"/><rect x="29" y="18" width="4" height="1" fill="#dcdcaa"/><rect x="29" y="19" width="4" height="1" fill="#dcdcaa" fill-opacity="0.45"/><rect x="33" y="18" width="2" height="1" fill="#ffd700"/><rect x="33" y="19" width="2" height="1" fill="#ffd700" fill-opacity="0.45"/><rect x="0" y="20" width="1" height="1" fill="#ffd700"/><rect x="0" y="21" width="1" height="1" fill="#ffd700" fill-opacity="0.45"/><rect x="4" y="24" width="8" height="1" fill="#dcdcaa"/><rect x="4" y="25" width="8" height="1" fill="#dcdcaa" fill-opacity="0.45"/><rect x="12" y="24" width="1" height="1" fill="#da70d6"/><rect x="12" y="25" width="1" height="1" fill="#da70d6" fill-opacity="0.45"/><rect x="13" y="24" width="2" height="1" fill="#cccccc"/><rect x="13" y="25" width="2" height="1" fill="#cccccc" fill-opacity="0.45"/><rect x="15" y="24" width="8" height="1" fill="#4ec9b0"/><rect x="15" y="25" width="8" height="1" fill="#4ec9b0" fill-opacity="0.45"/><rect x="23" y="24" width="2" height="1" fill="#cccccc"/><rect x="23" y="25" width="2" height="1" fill="#cccccc" fill-opacity="0.45"/><rect x="25" y="24" width="5" height="1" fill="#4ec9b0"/><rect x="25" y="25" width="5" height="1" fill="#4ec9b0" fill-opacity="0.45"/><rect x="30" y="24" width="2" height="1" fill="#cccccc"/><rect x="30" y="25" width="2" height="1" fill="#cccccc" fill-opacity="0.45"/><rect x="32" y="24" width="21" height="1" fill="#4fc1ff"/><rect x="32" y="25" width="21" height="1" fill="#4fc1ff" fill-opacity="0.45"/><rect x="53" y="24" width="1" height="1" fill="#cccccc"/><rect x="53" y="25" width="1" height="1" fill="#cccccc" fill-opacity="0.45"/><rect x="55" y="24" width="1" height="1" fill="#cccccc"/><rect x="55" y="25" width="1" height="1" fill="#cccccc" fill-opacity="0.45"/><rect x="56" y="24" width="22" height="1" fill="#4ec9b0"/><rect x="56" y="25" width="22" height="1" fill="#4ec9b0" fill-opacity="0.45"/><rect x="78" y="24" width="2" height="1" fill="#cccccc"/><rect x="78" y="25" width="2" height="1" fill="#cccccc" fill-opacity="0.45"/><rect x="80" y="24" width="17" height="1" fill="#dcdcaa"/><rect x="80" y="25" width="17" height="1" fill="#dcdcaa" fill-opacity="0.45"/><rect x="97" y="24" width="1" height="1" fill="#cccccc"/><rect x="97" y="25" width="1" height="1" fill="#cccccc" fill-opacity="0.45"/><rect x="99" y="24" width="6" height="1" fill="#569cd6"/><rect x="99" y="25" width="6" height="1" fill="#569cd6" fill-opacity="0.45"/><rect x="105" y="24" width="1" height="1" fill="#179fff"/><rect x="105" y="25" width="1" height="1" fill="#179fff" fill-opacity="0.45"/><rect x="106" y="24" width="2" height="1" fill="#cccccc"/><rect x="106" y="25" width="2" height="1" fill="#cccccc" fill-opacity="0.45"/><rect x="108" y="24" width="8" height="1" fill="#4ec9b0"/><rect x="108" y="25" width="8" height="1" fill="#4ec9b0" fill-opacity="0.45"/><rect x="116" y="24" width="2" height="1" fill="#cccccc"/><rect x="116" y="25" width="2" height="1" fill="#cccccc" fill-opacity="0.45"/><rect x="118" y="24" width="15" height="1" fill="#4ec9b0"/><rect x="118" y="25" width="15" height="1" fill="#4ec9b0" fill-opacity="0.45"/><rect x="133" y="24" width="1" height="1" fill="#179fff"/><rect x="133" y="25" width="1" height="1" fill="#179fff" fill-opacity="0.45"/><rect x="134" y="24" width="1" height="1" fill="#da70d6"/><rect x="134" y="25" width="1" height="1" fill="#da70d6" fill-opacity="0.45"/><rect x="135" y="24" width="1" height="1" fill="#cccccc"/><rect x="135" y="25" width="1" height="1" fill="#cccccc" fill-opacity="0.45"/><rect x="4" y="26" width="8" height="1" fill="#dcdcaa"/><rect x="4" y="27" width="8" height="1" fill="#dcdcaa" fill-opacity="0.45"/><rect x="12" y="26" width="1" height="1" fill="#da70d6"/><rect x="12" y="27" width="1" height="1" fill="#da70d6" fill-opacity="0.45"/><rect x="13" y="26" width="2" height="1" fill="#cccccc"/><rect x="13" y="27" width="2" height="1" fill="#cccccc" fill-opacity="0.45"/><rect x="15" y="26" width="8" height="1" fill="#4ec9b0"/><rect x="15" y="27" width="8" height="1" fill="#4ec9b0" fill-opacity="0.45"/><rect x="23" y="26" width="2" height="1" fill="#cccccc"/><rect x="23" y="27" width="2" height="1" fill="#cccccc" fill-opacity="0.45"/><rect x="25" y="26" width="5" height="1" fill="#4ec9b0"/><rect x="25" y="27" width="5" height="1" fill="#4ec9b0" fill-opacity="0.45"/><rect x="30" y="26" width="2" height="1" fill="#cccccc"/><rect x="30" y="27" width="2" height="1" fill="#cccccc" fill-opacity="0.45"/><rect x="32" y="26" width="17" height="1" fill="#4fc1ff"/><rect x="32" y="27" width="17" height="1" fill="#4fc1ff" fill-opacity="0.45"/><rect x="49" y="26" width="1" height="1" fill="#cccccc"/><rect x="49" y="27" width="1" height="1" fill="#cccccc" fill-opacity="0.45"/><rect x="51" y="26" width="1" height="1" fill="#cccccc"/><rect x="51" y="27" width="1" height="1" fill="#cccccc" fill-opacity="0.45"/><rect x="52" y="26" width="22" height="1" fill="#4ec9b0"/><rect x="52" y="27" width="22" height="1" fill="#4ec9b0" fill-opacity="0.45"/><rect x="74" y="26" width="2" height="1" fill="#cccccc"/><rect x="74" y="27" width="2" height="1" fill="#cccccc" fill-opacity="0.45"/><rect x="76" y="26" width="13" height="1" fill="#dcdcaa"/><rect x="76" y="27" width="13" height="1" fill="#dcdcaa" fill-opacity="0.45"/><rect x="89" y="26" width="1" height="1" fill="#cccccc"/><rect x="89" y="27" width="1" height="1" fill="#cccccc" fill-opacity="0.45"/><rect x="91" y="26" width="6" height="1" fill="#569cd6"/><rect x="91" y="27" width="6" height="1" fill="#569cd6" fill-opacity="0.45"/><rect x="97" y="26" width="1" height="1" fill="#179fff"/><rect x="97" y="27" width="1" height="1" fill="#179fff" fill-opacity="0.45"/><rect x="98" y="26" width="2" height="1" fill="#cccccc"/><rect x="98" y="27" width="2" height="1" fill="#cccccc" fill-opacity="0.45"/><rect x="100" y="26" width="8" height="1" fill="#4ec9b0"/><rect x="100" y="27" width="8" height="1" fill="#4ec9b0" fill-opacity="0.45"/><rect x="108" y="26" width="2" height="1" fill="#cccccc"/><rect x="108" y="27" width="2" height="1" fill="#cccccc" fill-opacity="0.45"/><rect x="110" y="26" width="11" height="1" fill="#4ec9b0"/><rect x="110" y="27" width="11" height="1" fill="#4ec9b0" fill-opacity="0.45"/><rect x="121" y="26" width="1" height="1" fill="#179fff"/><rect x="121" y="27" width="1" height="1" fill="#179fff" fill-opacity="0.45"/><rect x="122" y="26" width="1" height="1" fill="#da70d6"/><rect x="122" y="27" width="1" height="1" fill="#da70d6" fill-opacity="0.45"/><rect x="123" y="26" width="1" height="1" fill="#cccccc"/><rect x="123" y="27" width="1" height="1" fill="#cccccc" fill-opacity="0.45"/><rect x="4" y="28" width="8" height="1" fill="#dcdcaa"/><rect x="4" y="29" width="8" height="1" fill="#dcdcaa" fill-opacity="0.45"/><rect x="12" y="28" width="1" height="1" fill="#da70d6"/><rect x="12" y="29" width="1" height="1" fill="#da70d6" fill-opacity="0.45"/><rect x="13" y="28" width="2" height="1" fill="#cccccc"/><rect x="13" y="29" width="2" height="1" fill="#cccccc" fill-opacity="0.45"/><rect x="15" y="28" width="8" height="1" fill="#4ec9b0"/><rect x="15" y="29" width="8" height="1" fill="#4ec9b0" fill-opacity="0.45"/><rect x="23" y="28" width="2" height="1" fill="#cccccc"/><rect x="23" y="29" width="2" height="1" fill="#cccccc" fill-opacity="0.45"/><rect x="25" y="28" width="5" height="1" fill="#4ec9b0"/><rect x="25" y="29" width="5" height="1" fill="#4ec9b0" fill-opacity="0.45"/><rect x="30" y="28" width="2" height="1" fill="#cccccc"/><rect x="30" y="29" width="2" height="1" fill="#cccccc" fill-opacity="0.45"/><rect x="32" y="28" width="18" height="1" fill="#4fc1ff"/><rect x="32" y="29" width="18" height="1" fill="#4fc1ff" fill-opacity="0.45"/><rect x="50" y="28" width="1" height="1" fill="#cccccc"/><rect x="50" y="29" width="1" height="1" fill="#cccccc" fill-opacity="0.45"/><rect x="52" y="28" width="1" height="1" fill="#cccccc"/><rect x="52" y="29" width="1" height="1" fill="#cccccc" fill-opacity="0.45"/><rect x="53" y="28" width="22" height="1" fill="#4ec9b0"/><rect x="53" y="29" width="22" height="1" fill="#4ec9b0" fill-opacity="0.45"/><rect x="75" y="28" width="2" height="1" fill="#cccccc"/><rect x="75" y="29" width="2" height="1" fill="#cccccc" fill-opacity="0.45"/><rect x="77" y="28" width="14" height="1" fill="#dcdcaa"/><rect x="77" y="29" width="14" height="1" fill="#dcdcaa" fill-opacity="0.45"/><rect x="91" y="28" width="1" height="1" fill="#cccccc"/><rect x="91" y="29" width="1" height="1" fill="#cccccc" fill-opacity="0.45"/><rect x="93" y="28" width="6" height="1" fill="#569cd6"/><rect x="93" y="29" width="6" height="1" fill="#569cd6" fill-opacity="0.45"/><rect x="99" y="28" width="1" height="1" fill="#179fff"/><rect x="99" y="29" width="1" height="1" fill="#179fff" fill-opacity="0.45"/><rect x="100" y="28" width="2" height="1" fill="#cccccc"/><rect x="100" y="29" width="2" height="1" fill="#cccccc" fill-opacity="0.45"/><rect x="102" y="28" width="8" height="1" fill="#4ec9b0"/><rect x="102" y="29" width="8" height="1" fill="#4ec9b0" fill-opacity="0.45"/><rect x="110" y="28" width="2" height="1" fill="#cccccc"/><rect x="110" y="29" width="2" height="1" fill="#cccccc" fill-opacity="0.45"/><rect x="112" y="28" width="12" height="1" fill="#4ec9b0"/><rect x="112" y="29" width="12" height="1" fill="#4ec9b0" fill-opacity="0.45"/><rect x="124" y="28" width="1" height="1" fill="#179fff"/><rect x="124" y="29" width="1" height="1" fill="#179fff" fill-opacity="0.45"/><rect x="125" y="28" width="1" height="1" fill="#da70d6"/><rect x="125" y="29" width="1" height="1" fill="#da70d6" fill-opacity="0.45"/><rect x="126" y="28" width="1" height="1" fill="#cccccc"/><rect x="126" y="29" width="1" height="1" fill="#cccccc" fill-opacity="0.45"/><rect x="4" y="30" width="6" height="1" fill="#c586c0"/><rect x="4" y="31" width="6" height="1" fill="#c586c0" fill-opacity="0.45"/><rect x="11" y="30" width="4" height="1" fill="#569cd6"/><rect x="11" y="31" width="4" height="1" fill="#569cd6" fill-opacity="0.45"/><rect x="15" y="30" width="1" height="1" fill="#cccccc"/><rect x="15" y="31" width="1" height="1" fill="#cccccc" fill-opacity="0.45"/><rect x="0" y="32" width="1" height="1" fill="#ffd700"/><rect x="0" y="33" width="1" height="1" fill="#ffd700" fill-opacity="0.45"/><rect x="0" y="36" width="3" height="1" fill="#569cd6"/><rect x="0" y="37" width="3" height="1" fill="#569cd6" fill-opacity="0.45"/><rect x="4" y="36" width="22" height="1" fill="#4ec9b0"/><rect x="4" y="37" width="22" height="1" fill="#4ec9b0" fill-opacity="0.45"/><rect x="26" y="36" width="2" height="1" fill="#cccccc"/><rect x="26" y="37" width="2" height="1" fill="#cccccc" fill-opacity="0.45"/><rect x="28" y="36" width="7" height="1" fill="#dcdcaa"/><rect x="28" y="37" width="7" height="1" fill="#dcdcaa" fill-opacity="0.45"/><rect x="35" y="36" width="1" height="1" fill="#ffd700"/><rect x="35" y="37" width="1" height="1" fill="#ffd700" fill-opacity="0.45"/><rect x="36" y="36" width="8" height="1" fill="#4ec9b0"/><rect x="36" y="37" width="8" height="1" fill="#4ec9b0" fill-opacity="0.45"/><rect x="45" y="36" width="6" height="1" fill="#9cdcfe"/><rect x="45" y="37" width="6" height="1" fill="#9cdcfe" fill-opacity="0.45"/><rect x="51" y="36" width="1" height="1" fill="#cccccc"/><rect x="51" y="37" width="1" height="1" fill="#cccccc" fill-opacity="0.45"/><rect x="53" y="36" width="5" height="1" fill="#569cd6"/><rect x="53" y="37" width="5" height="1" fill="#569cd6" fill-opacity="0.45"/><rect x="59" y="36" width="5" height="1" fill="#9cdcfe"/><rect x="59" y="37" width="5" height="1" fill="#9cdcfe" fill-opacity="0.45"/><rect x="64" y="36" width="1" height="1" fill="#cccccc"/><rect x="64" y="37" width="1" height="1" fill="#cccccc" fill-opacity="0.45"/><rect x="66" y="36" width="3" height="1" fill="#569cd6"/><rect x="66" y="37" width="3" height="1" fill="#569cd6" fill-opacity="0.45"/><rect x="70" y="36" width="4" height="1" fill="#9cdcfe"/><rect x="70" y="37" width="4" height="1" fill="#9cdcfe" fill-opacity="0.45"/><rect x="74" y="36" width="1" height="1" fill="#cccccc"/><rect x="74" y="37" width="1" height="1" fill="#cccccc" fill-opacity="0.45"/><rect x="76" y="36" width="5" height="1" fill="#569cd6"/><rect x="76" y="37" width="5" height="1" fill="#569cd6" fill-opacity="0.45"/><rect x="82" y="36" width="5" height="1" fill="#569cd6"/><rect x="82" y="37" width="5" height="1" fill="#569cd6" fill-opacity="0.45"/><rect x="88" y="36" width="7" height="1" fill="#9cdcfe"/><rect x="88" y="37" width="7" height="1" fill="#9cdcfe" fill-opacity="0.45"/><rect x="96" y="36" width="1" height="1" fill="#cccccc"/><rect x="96" y="37" width="1" height="1" fill="#cccccc" fill-opacity="0.45"/><rect x="98" y="36" width="4" height="1" fill="#569cd6"/><rect x="98" y="37" width="4" height="1" fill="#569cd6" fill-opacity="0.45"/><rect x="102" y="36" width="1" height="1" fill="#ffd700"/><rect x="102" y="37" width="1" height="1" fill="#ffd700" fill-opacity="0.45"/><rect x="0" y="38" width="1" height="1" fill="#ffd700"/><rect x="0" y="39" width="1" height="1" fill="#ffd700" fill-opacity="0.45"/><rect x="4" y="40" width="2" height="1" fill="#cccccc"/><rect x="4" y="41" width="2" height="1" fill="#cccccc" fill-opacity="0.45"/><rect x="6" y="40" width="6" height="1" fill="#4ec9b0"/><rect x="6" y="41" width="6" height="1" fill="#4ec9b0" fill-opacity="0.45"/><rect x="12" y="40" width="2" height="1" fill="#cccccc"/><rect x="12" y="41" width="2" height="1" fill="#cccccc" fill-opacity="0.45"/><rect x="14" y="40" width="8" height="1" fill="#4ec9b0"/><rect x="14" y="41" width="8" height="1" fill="#4ec9b0" fill-opacity="0.45"/><rect x="22" y="40" width="10" height="1" fill="#cccccc"/><rect x="22" y="41" width="10" height="1" fill="#cccccc" fill-opacity="0.45"/><rect x="33" y="40" width="5" height="1" fill="#cccccc"/><rect x="33" y="41" width="5" height="1" fill="#cccccc" fill-opacity="0.45"/><rect x="39" y="40" width="1" height="1" fill="#cccccc"/><rect x="39" y="41" width="1" height="1" fill="#cccccc" fill-opacity="0.45"/><rect x="41" y="40" width="13" height="1" fill="#dcdcaa"/><rect x="41" y="41" width="13" height="1" fill="#dcdcaa" fill-opacity="0.45"/><rect x="54" y="40" width="1" height="1" fill="#da70d6"/><rect x="54" y="41" width="1" height="1" fill="#da70d6" fill-opacity="0.45"/><rect x="55" y="40" width="6" height="1" fill="#9cdcfe"/><rect x="55" y="41" width="6" height="1" fill="#9cdcfe" fill-opacity="0.45"/><rect x="61" y="40" width="1" height="1" fill="#da70d6"/><rect x="61" y="41" width="1" height="1" fill="#da70d6" fill-opacity="0.45"/><rect x="62" y="40" width="1" height="1" fill="#cccccc"/><rect x="62" y="41" width="1" height="1" fill="#cccccc" fill-opacity="0.45"/><rect x="4" y="42" width="2" height="1" fill="#c586c0"/><rect x="4" y="43" width="2" height="1" fill="#c586c0" fill-opacity="0.45"/><rect x="7" y="42" width="1" height="1" fill="#da70d6"/><rect x="7" y="43" width="1" height="1" fill="#da70d6" fill-opacity="0.45"/><rect x="8" y="42" width="4" height="1" fill="#569cd6"/><rect x="8" y="43" width="4" height="1" fill="#569cd6" fill-opacity="0.45"/><rect x="13" y="42" width="2" height="1" fill="#cccccc"/><rect x="13" y="43" width="2" height="1" fill="#cccccc" fill-opacity="0.45"/><rect x="16" y="42" width="5" height="1" fill="#cccccc"/><rect x="16" y="43" width="5" height="1" fill="#cccccc" fill-opacity="0.45"/><rect x="21" y="42" width="1" height="1" fill="#da70d6"/><rect x="21" y="43" width="1" height="1" fill="#da70d6" fill-opacity="0.45"/><rect x="4" y="44" width="1" height="1" fill="#da70d6"/><rect x="4" y="45" width="1" height="1" fill="#da70d6" fill-opacity="0.45"/><rect x="8" y="46" width="6" height="1" fill="#c586c0"/><rect x="8" y="47" width="6" height="1" fill="#c586c0" fill-opacity="0.45"/><rect x="15" y="46" width="10" height="1" fill="#dcdcaa"/><rect x="15" y="47" width="10" height="1" fill="#dcdcaa" fill-opacity="0.45"/><rect x="25" y="46" width="2" height="1" fill="#179fff"/><rect x="25" y="47" width="2" height="1" fill="#179fff" fill-opacity="0.45"/><rect x="27" y="46" width="1" height="1" fill="#cccccc"/><rect x="27" y="47" width="1" height="1" fill="#cccccc" fill-opacity="0.45"/><rect x="4" y="48" width="1" height="1" fill="#da70d6"/><rect x="4" y="49" width="1" height="1" fill="#da70d6" fill-opacity="0.45"/><rect x="4" y="52" width="2" height="1" fill="#c586c0"/><rect x="4" y="53" width="2" height="1" fill="#c586c0" fill-opacity="0.45"/><rect x="7" y="52" width="1" height="1" fill="#da70d6"/><rect x="7" y="53" width="1" height="1" fill="#da70d6" fill-opacity="0.45"/><rect x="8" y="52" width="1" height="1" fill="#cccccc"/><rect x="8" y="53" width="1" height="1" fill="#cccccc" fill-opacity="0.45"/><rect x="9" y="52" width="5" height="1" fill="#9cdcfe"/><rect x="9" y="53" width="5" height="1" fill="#9cdcfe" fill-opacity="0.45"/><rect x="14" y="52" width="2" height="1" fill="#cccccc"/><rect x="14" y="53" width="2" height="1" fill="#cccccc" fill-opacity="0.45"/><rect x="16" y="52" width="14" height="1" fill="#dcdcaa"/><rect x="16" y="53" width="14" height="1" fill="#dcdcaa" fill-opacity="0.45"/><rect x="30" y="52" width="1" height="1" fill="#179fff"/><rect x="30" y="53" width="1" height="1" fill="#179fff" fill-opacity="0.45"/><rect x="31" y="52" width="5" height="1" fill="#9cdcfe"/><rect x="31" y="53" width="5" height="1" fill="#9cdcfe" fill-opacity="0.45"/><rect x="36" y="52" width="1" height="1" fill="#cccccc"/><rect x="36" y="53" width="1" height="1" fill="#cccccc" fill-opacity="0.45"/><rect x="38" y="52" width="4" height="1" fill="#9cdcfe"/><rect x="38" y="53" width="4" height="1" fill="#9cdcfe" fill-opacity="0.45"/><rect x="42" y="52" width="1" height="1" fill="#179fff"/><rect x="42" y="53" width="1" height="1" fill="#179fff" fill-opacity="0.45"/><rect x="43" y="52" width="1" height="1" fill="#da70d6"/><rect x="43" y="53" width="1" height="1" fill="#da70d6" fill-opacity="0.45"/><rect x="4" y="54" width="1" height="1" fill="#da70d6"/><rect x="4" y="55" width="1" height="1" fill="#da70d6" fill-opacity="0.45"/><rect x="8" y="56" width="14" height="1" fill="#dcdcaa"/><rect x="8" y="57" width="14" height="1" fill="#dcdcaa" fill-opacity="0.45"/><rect x="22" y="56" width="1" height="1" fill="#179fff"/><rect x="22" y="57" width="1" height="1" fill="#179fff" fill-opacity="0.45"/><rect x="23" y="56" width="5" height="1" fill="#cccccc"/><rect x="23" y="57" width="5" height="1" fill="#cccccc" fill-opacity="0.45"/><rect x="28" y="56" width="1" height="1" fill="#179fff"/><rect x="28" y="57" width="1" height="1" fill="#179fff" fill-opacity="0.45"/><rect x="29" y="56" width="1" height="1" fill="#cccccc"/><rect x="29" y="57" width="1" height="1" fill="#cccccc" fill-opacity="0.45"/><rect x="8" y="58" width="6" height="1" fill="#c586c0"/><rect x="8" y="59" width="6" height="1" fill="#c586c0" fill-opacity="0.45"/><rect x="15" y="58" width="10" height="1" fill="#dcdcaa"/><rect x="15" y="59" width="10" height="1" fill="#dcdcaa" fill-opacity="0.45"/><rect x="25" y="58" width="2" height="1" fill="#179fff"/><rect x="25" y="59" width="2" height="1" fill="#179fff" fill-opacity="0.45"/><rect x="27" y="58" width="1" height="1" fill="#cccccc"/><rect x="27" y="59" width="1" height="1" fill="#cccccc" fill-opacity="0.45"/><rect x="4" y="60" width="1" height="1" fill="#da70d6"/><rect x="4" y="61" width="1" height="1" fill="#da70d6" fill-opacity="0.45"/><rect x="4" y="62" width="3" height="1" fill="#569cd6"/><rect x="4" y="63" width="3" height="1" fill="#569cd6" fill-opacity="0.45"/><rect x="8" y="62" width="7" height="1" fill="#9cdcfe"/><rect x="8" y="63" width="7" height="1" fill="#9cdcfe" fill-opacity="0.45"/><rect x="16" y="62" width="1" height="1" fill="#cccccc"/><rect x="16" y="63" width="1" height="1" fill="#cccccc" fill-opacity="0.45"/><rect x="18" y="62" width="6" height="1" fill="#dcdcaa"/><rect x="18" y="63" width="6" height="1" fill="#dcdcaa" fill-opacity="0.45"/><rect x="24" y="62" width="1" height="1" fill="#da70d6"/><rect x="24" y="63" width="1" height="1" fill="#da70d6" fill-opacity="0.45"/><rect x="25" y="62" width="6" height="1" fill="#9cdcfe"/><rect x="25" y="63" width="6" height="1" fill="#9cdcfe" fill-opacity="0.45"/><rect x="31" y="62" width="1" height="1" fill="#cccccc"/><rect x="31" y="63" width="1" height="1" fill="#cccccc" fill-opacity="0.45"/><rect x="33" y="62" width="7" height="1" fill="#cccccc"/><rect x="33" y="63" width="7" height="1" fill="#cccccc" fill-opacity="0.45"/><rect x="41" y="62" width="5" height="1" fill="#9cdcfe"/><rect x="41" y="63" width="5" height="1" fill="#9cdcfe" fill-opacity="0.45"/><rect x="46" y="62" width="2" height="1" fill="#cccccc"/><rect x="46" y="63" width="2" height="1" fill="#cccccc" fill-opacity="0.45"/><rect x="48" y="62" width="8" height="1" fill="#dcdcaa"/><rect x="48" y="63" width="8" height="1" fill="#dcdcaa" fill-opacity="0.45"/><rect x="56" y="62" width="2" height="1" fill="#179fff"/><rect x="56" y="63" width="2" height="1" fill="#179fff" fill-opacity="0.45"/><rect x="58" y="62" width="1" height="1" fill="#cccccc"/><rect x="58" y="63" width="1" height="1" fill="#cccccc" fill-opacity="0.45"/><rect x="60" y="62" width="7" height="1" fill="#9cdcfe"/><rect x="60" y="63" width="7" height="1" fill="#9cdcfe" fill-opacity="0.45"/><rect x="67" y="62" width="1" height="1" fill="#da70d6"/><rect x="67" y="63" width="1" height="1" fill="#da70d6" fill-opacity="0.45"/><rect x="68" y="62" width="1" height="1" fill="#cccccc"/><rect x="68" y="63" width="1" height="1" fill="#cccccc" fill-opacity="0.45"/><rect x="4" y="64" width="14" height="1" fill="#dcdcaa"/><rect x="4" y="65" width="14" height="1" fill="#dcdcaa" fill-opacity="0.45"/><rect x="18" y="64" width="1" height="1" fill="#da70d6"/><rect x="18" y="65" width="1" height="1" fill="#da70d6" fill-opacity="0.45"/><rect x="19" y="64" width="5" height="1" fill="#cccccc"/><rect x="19" y="65" width="5" height="1" fill="#cccccc" fill-opacity="0.45"/><rect x="24" y="64" width="1" height="1" fill="#da70d6"/><rect x="24" y="65" width="1" height="1" fill="#da70d6" fill-opacity="0.45"/><rect x="25" y="64" width="1" height="1" fill="#cccccc"/><rect x="25" y="65" width="1" height="1" fill="#cccccc" fill-opacity="0.45"/><rect x="4" y="66" width="6" height="1" fill="#c586c0"/><rect x="4" y="67" width="6" height="1" fill="#c586c0" fill-opacity="0.45"/><rect x="11" y="66" width="7" height="1" fill="#9cdcfe"/><rect x="11" y="67" width="7" height="1" fill="#9cdcfe" fill-opacity="0.45"/><rect x="18" y="66" width="1" height="1" fill="#cccccc"/><rect x="18" y="67" width="1" height="1" fill="#cccccc" fill-opacity="0.45"/><rect x="0" y="68" width="1" height="1" fill="#ffd700"/><rect x="0" y="69" width="1" height="1" fill="#ffd700" fill-opacity="0.45"/><rect x="0" y="72" width="2" height="1" fill="#cccccc"/><rect x="0" y="73" width="2" height="1" fill="#cccccc" fill-opacity="0.45"/><rect x="2" y="72" width="6" height="1" fill="#4ec9b0"/><rect x="2" y="73" width="6" height="1" fill="#4ec9b0" fill-opacity="0.45"/><rect x="8" y="72" width="2" height="1" fill="#cccccc"/><rect x="8" y="73" width="2" height="1" fill="#cccccc" fill-opacity="0.45"/><rect x="10" y="72" width="8" height="1" fill="#4ec9b0"/><rect x="10" y="73" width="8" height="1" fill="#4ec9b0" fill-opacity="0.45"/><rect x="18" y="72" width="2" height="1" fill="#cccccc"/><rect x="18" y="73" width="2" height="1" fill="#cccccc" fill-opacity="0.45"/><rect x="20" y="72" width="8" height="1" fill="#4ec9b0"/><rect x="20" y="73" width="8" height="1" fill="#4ec9b0" fill-opacity="0.45"/><rect x="29" y="72" width="22" height="1" fill="#4ec9b0"/><rect x="29" y="73" width="22" height="1" fill="#4ec9b0" fill-opacity="0.45"/><rect x="51" y="72" width="2" height="1" fill="#cccccc"/><rect x="51" y="73" width="2" height="1" fill="#cccccc" fill-opacity="0.45"/><rect x="53" y="72" width="13" height="1" fill="#dcdcaa"/><rect x="53" y="73" width="13" height="1" fill="#dcdcaa" fill-opacity="0.45"/><rect x="66" y="72" width="1" height="1" fill="#ffd700"/><rect x="66" y="73" width="1" height="1" fill="#ffd700" fill-opacity="0.45"/><rect x="67" y="72" width="8" height="1" fill="#4ec9b0"/><rect x="67" y="73" width="8" height="1" fill="#4ec9b0" fill-opacity="0.45"/><rect x="76" y="72" width="6" height="1" fill="#9cdcfe"/><rect x="76" y="73" width="6" height="1" fill="#9cdcfe" fill-opacity="0.45"/><rect x="82" y="72" width="1" height="1" fill="#ffd700"/><rect x="82" y="73" width="1" height="1" fill="#ffd700" fill-opacity="0.45"/><rect x="0" y="74" width="1" height="1" fill="#ffd700"/><rect x="0" y="75" width="1" height="1" fill="#ffd700" fill-opacity="0.45"/><rect x="4" y="76" width="6" height="1" fill="#c586c0"/><rect x="4" y="77" width="6" height="1" fill="#c586c0" fill-opacity="0.45"/><rect x="10" y="76" width="1" height="1" fill="#da70d6"/><rect x="10" y="77" width="1" height="1" fill="#da70d6" fill-opacity="0.45"/><rect x="11" y="76" width="6" height="1" fill="#9cdcfe"/><rect x="11" y="77" width="6" height="1" fill="#9cdcfe" fill-opacity="0.45"/><rect x="17" y="76" width="1" height="1" fill="#da70d6"/><rect x="17" y="77" width="1" height="1" fill="#da70d6" fill-opacity="0.45"/><rect x="4" y="78" width="1" height="1" fill="#da70d6"/><rect x="4" y="79" width="1" height="1" fill="#da70d6" fill-opacity="0.45"/><rect x="4" y="82" width="4" height="1" fill="#c586c0"/><rect x="4" y="83" width="4" height="1" fill="#c586c0" fill-opacity="0.45"/><rect x="9" y="82" width="2" height="1" fill="#cccccc"/><rect x="9" y="83" width="2" height="1" fill="#cccccc" fill-opacity="0.45"/><rect x="11" y="82" width="8" height="1" fill="#4ec9b0"/><rect x="11" y="83" width="8" height="1" fill="#4ec9b0" fill-opacity="0.45"/><rect x="19" y="82" width="2" height="1" fill="#cccccc"/><rect x="19" y="83" width="2" height="1" fill="#cccccc" fill-opacity="0.45"/><rect x="21" y="82" width="5" height="1" fill="#4ec9b0"/><rect x="21" y="83" width="5" height="1" fill="#4ec9b0" fill-opacity="0.45"/><rect x="26" y="82" width="2" height="1" fill="#cccccc"/><rect x="26" y="83" width="2" height="1" fill="#cccccc" fill-opacity="0.45"/><rect x="28" y="82" width="21" height="1" fill="#4fc1ff"/><rect x="28" y="83" width="21" height="1" fill="#4fc1ff" fill-opacity="0.45"/><rect x="49" y="82" width="1" height="1" fill="#cccccc"/><rect x="49" y="83" width="1" height="1" fill="#cccccc" fill-opacity="0.45"/><rect x="8" y="84" width="1" height="1" fill="#179fff"/><rect x="8" y="85" width="1" height="1" fill="#179fff" fill-opacity="0.45"/><rect x="12" y="86" width="6" height="1" fill="#c586c0"/><rect x="12" y="87" width="6" height="1" fill="#c586c0" fill-opacity="0.45"/><rect x="19" y="86" width="3" height="1" fill="#c586c0"/><rect x="19" y="87" width="3" height="1" fill="#c586c0" fill-opacity="0.45"/><rect x="23" y="86" width="2" height="1" fill="#cccccc"/><rect x="23" y="87" width="2" height="1" fill="#cccccc" fill-opacity="0.45"/><rect x="25" y="86" width="8" height="1" fill="#4ec9b0"/><rect x="25" y="87" width="8" height="1" fill="#4ec9b0" fill-opacity="0.45"/><rect x="33" y="86" width="2" height="1" fill="#cccccc"/><rect x="33" y="87" width="2" height="1" fill="#cccccc" fill-opacity="0.45"/><rect x="35" y="86" width="15" height="1" fill="#4ec9b0"/><rect x="35" y="87" width="15" height="1" fill="#4ec9b0" fill-opacity="0.45"/><rect x="50" y="86" width="1" height="1" fill="#cccccc"/><rect x="50" y="87" width="1" height="1" fill="#cccccc" fill-opacity="0.45"/><rect x="8" y="88" width="1" height="1" fill="#179fff"/><rect x="8" y="89" width="1" height="1" fill="#179fff" fill-opacity="0.45"/><rect x="8" y="90" width="5" height="1" fill="#c586c0"/><rect x="8" y="91" width="5" height="1" fill="#c586c0" fill-opacity="0.45"/><rect x="13" y="90" width="1" height="1" fill="#cccccc"/><rect x="13" y="91" width="1" height="1" fill="#cccccc" fill-opacity="0.45"/><rect x="4" y="94" width="4" height="1" fill="#c586c0"/><rect x="4" y="95" width="4" height="1" fill="#c586c0" fill-opacity="0.45"/><rect x="9" y="94" width="2" height="1" fill="#cccccc"/><rect x="9" y="95" width="2" height="1" fill="#cccccc" fill-opacity="0.45"/><rect x="11" y="94" width="8" height="1" fill="#4ec9b0"/><rect x="11" y="95" width="8" height="1" fill="#4ec9b0" fill-opacity="0.45"/><rect x="19" y="94" width="2" height="1" fill="#cccccc"/><rect x="19" y="95" width="2" height="1" fill="#cccccc" fill-opacity="0.45"/><rect x="21" y="94" width="5" height="1" fill="#4ec9b0"/><rect x="21" y="95" width="5" height="1" fill="#4ec9b0" fill-opacity="0.45"/><rect x="26" y="94" width="2" height="1" fill="#cccccc"/><rect x="26" y="95" width="2" height="1" fill="#cccccc" fill-opacity="0.45"/><rect x="28" y="94" width="17" height="1" fill="#4fc1ff"/><rect x="28" y="95" width="17" height="1" fill="#4fc1ff" fill-opacity="0.45"/><rect x="45" y="94" width="1" height="1" fill="#cccccc"/><rect x="45" y="95" width="1" height="1" fill="#cccccc" fill-opacity="0.45"/><rect x="8" y="96" width="1" height="1" fill="#179fff"/><rect x="8" y="97" width="1" height="1" fill="#179fff" fill-opacity="0.45"/><rect x="12" y="98" width="6" height="1" fill="#c586c0"/><rect x="12" y="99" width="6" height="1" fill="#c586c0" fill-opacity="0.45"/><rect x="19" y="98" width="3" height="1" fill="#c586c0"/><rect x="19" y="99" width="3" height="1" fill="#c586c0" fill-opacity="0.45"/><rect x="23" y="98" width="2" height="1" fill="#cccccc"/><rect x="23" y="99" width="2" height="1" fill="#cccccc" fill-opacity="0.45"/><rect x="25" y="98" width="8" height="1" fill="#4ec9b0"/><rect x="25" y="99" width="8" height="1" fill="#4ec9b0" fill-opacity="0.45"/><rect x="33" y="98" width="2" height="1" fill="#cccccc"/><rect x="33" y="99" width="2" height="1" fill="#cccccc" fill-opacity="0.45"/><rect x="35" y="98" width="11" height="1" fill="#4ec9b0"/><rect x="35" y="99" width="11" height="1" fill="#4ec9b0" fill-opacity="0.45"/><rect x="46" y="98" width="1" height="1" fill="#cccccc"/><rect x="46" y="99" width="1" height="1" fill="#cccccc" fill-opacity="0.45"/><rect x="8" y="100" width="1" height="1" fill="#179fff"/><rect x="8" y="101" width="1" height="1" fill="#179fff" fill-opacity="0.45"/><rect x="8" y="102" width="5" height="1" fill="#c586c0"/><rect x="8" y="103" width="5" height="1" fill="#c586c0" fill-opacity="0.45"/><rect x="13" y="102" width="1" height="1" fill="#cccccc"/><rect x="13" y="103" width="1" height="1" fill="#cccccc" fill-opacity="0.45"/><rect x="4" y="106" width="4" height="1" fill="#c586c0"/><rect x="4" y="107" width="4" height="1" fill="#c586c0" fill-opacity="0.45"/><rect x="9" y="106" width="2" height="1" fill="#cccccc"/><rect x="9" y="107" width="2" height="1" fill="#cccccc" fill-opacity="0.45"/><rect x="11" y="106" width="8" height="1" fill="#4ec9b0"/><rect x="11" y="107" width="8" height="1" fill="#4ec9b0" fill-opacity="0.45"/><rect x="19" y="106" width="2" height="1" fill="#cccccc"/><rect x="19" y="107" width="2" height="1" fill="#cccccc" fill-opacity="0.45"/><rect x="21" y="106" width="5" height="1" fill="#4ec9b0"/><rect x="21" y="107" width="5" height="1" fill="#4ec9b0" fill-opacity="0.45"/><rect x="26" y="106" width="2" height="1" fill="#cccccc"/><rect x="26" y="107" width="2" height="1" fill="#cccccc" fill-opacity="0.45"/><rect x="28" y="106" width="18" height="1" fill="#4fc1ff"/><rect x="28" y="107" width="18" height="1" fill="#4fc1ff" fill-opacity="0.45"/><rect x="46" y="106" width="1" height="1" fill="#cccccc"/><rect x="46" y="107" width="1" height="1" fill="#cccccc" fill-opacity="0.45"/><rect x="8" y="108" width="1" height="1" fill="#179fff"/><rect x="8" y="109" width="1" height="1" fill="#179fff" fill-opacity="0.45"/><rect x="12" y="110" width="6" height="1" fill="#c586c0"/><rect x="12" y="111" width="6" height="1" fill="#c586c0" fill-opacity="0.45"/><rect x="19" y="110" width="3" height="1" fill="#c586c0"/><rect x="19" y="111" width="3" height="1" fill="#c586c0" fill-opacity="0.45"/><rect x="23" y="110" width="2" height="1" fill="#cccccc"/><rect x="23" y="111" width="2" height="1" fill="#cccccc" fill-opacity="0.45"/><rect x="25" y="110" width="8" height="1" fill="#4ec9b0"/><rect x="25" y="111" width="8" height="1" fill="#4ec9b0" fill-opacity="0.45"/><rect x="33" y="110" width="2" height="1" fill="#cccccc"/><rect x="33" y="111" width="2" height="1" fill="#cccccc" fill-opacity="0.45"/><rect x="35" y="110" width="12" height="1" fill="#4ec9b0"/><rect x="35" y="111" width="12" height="1" fill="#4ec9b0" fill-opacity="0.45"/><rect x="47" y="110" width="1" height="1" fill="#cccccc"/><rect x="47" y="111" width="1" height="1" fill="#cccccc" fill-opacity="0.45"/><rect x="8" y="112" width="1" height="1" fill="#179fff"/><rect x="8" y="113" width="1" height="1" fill="#179fff" fill-opacity="0.45"/><rect x="8" y="114" width="5" height="1" fill="#c586c0"/><rect x="8" y="115" width="5" height="1" fill="#c586c0" fill-opacity="0.45"/><rect x="13" y="114" width="1" height="1" fill="#cccccc"/><rect x="13" y="115" width="1" height="1" fill="#cccccc" fill-opacity="0.45"/><rect x="4" y="118" width="7" height="1" fill="#c586c0"/><rect x="4" y="119" width="7" height="1" fill="#c586c0" fill-opacity="0.45"/><rect x="11" y="118" width="1" height="1" fill="#cccccc"/><rect x="11" y="119" width="1" height="1" fill="#cccccc" fill-opacity="0.45"/><rect x="8" y="120" width="6" height="1" fill="#dcdcaa"/><rect x="8" y="121" width="6" height="1" fill="#dcdcaa" fill-opacity="0.45"/><rect x="14" y="120" width="1" height="1" fill="#179fff"/><rect x="14" y="121" width="1" height="1" fill="#179fff" fill-opacity="0.45"/><rect x="15" y="120" width="1" height="1" fill="#b5cea8"/><rect x="15" y="121" width="1" height="1" fill="#b5cea8" fill-opacity="0.45"/><rect x="16" y="120" width="1" height="1" fill="#179fff"/><rect x="16" y="121" width="1" height="1" fill="#179fff" fill-opacity="0.45"/><rect x="17" y="120" width="1" height="1" fill="#cccccc"/><rect x="17" y="121" width="1" height="1" fill="#cccccc" fill-opacity="0.45"/><rect x="8" y="122" width="6" height="1" fill="#c586c0"/><rect x="8" y="123" width="6" height="1" fill="#c586c0" fill-opacity="0.45"/><rect x="15" y="122" width="4" height="1" fill="#569cd6"/><rect x="15" y="123" width="4" height="1" fill="#569cd6" fill-opacity="0.45"/><rect x="19" y="122" width="1" height="1" fill="#cccccc"/><rect x="19" y="123" width="1" height="1" fill="#cccccc" fill-opacity="0.45"/><rect x="4" y="124" width="1" height="1" fill="#da70d6"/><rect x="4" y="125" width="1" height="1" fill="#da70d6" fill-opacity="0.45"/><rect x="0" y="126" width="1" height="1" fill="#ffd700"/><rect x="0" y="127" width="1" height="1" fill="#ffd700" fill-opacity="0.45"/><rect x="0" y="130" width="4" height="1" fill="#569cd6"/><rect x="0" y="131" width="4" height="1" fill="#569cd6" fill-opacity="0.45"/><rect x="5" y="130" width="22" height="1" fill="#4ec9b0"/><rect x="5" y="131" width="22" height="1" fill="#4ec9b0" fill-opacity="0.45"/><rect x="27" y="130" width="2" height="1" fill="#cccccc"/><rect x="27" y="131" width="2" height="1" fill="#cccccc" fill-opacity="0.45"/><rect x="29" y="130" width="14" height="1" fill="#dcdcaa"/><rect x="29" y="131" width="14" height="1" fill="#dcdcaa" fill-opacity="0.45"/><rect x="43" y="130" width="1" height="1" fill="#ffd700"/><rect x="43" y="131" width="1" height="1" fill="#ffd700" fill-opacity="0.45"/><rect x="44" y="130" width="2" height="1" fill="#cccccc"/><rect x="44" y="131" width="2" height="1" fill="#cccccc" fill-opacity="0.45"/><rect x="46" y="130" width="6" height="1" fill="#4ec9b0"/><rect x="46" y="131" width="6" height="1" fill="#4ec9b0" fill-opacity="0.45"/><rect x="52" y="130" width="2" height="1" fill="#cccccc"/><rect x="52" y="131" width="2" height="1" fill="#cccccc" fill-opacity="0.45"/><rect x="54" y="130" width="8" height="1" fill="#4ec9b0"/><rect x="54" y="131" width="8" height="1" fill="#4ec9b0" fill-opacity="0.45"/><rect x="62" y="130" width="2" height="1" fill="#cccccc"/><rect x="62" y="131" width="2" height="1" fill="#cccccc" fill-opacity="0.45"/><rect x="64" y="130" width="8" height="1" fill="#4ec9b0"/><rect x="64" y="131" width="8" height="1" fill="#4ec9b0" fill-opacity="0.45"/><rect x="73" y="130" width="5" height="1" fill="#9cdcfe"/><rect x="73" y="131" width="5" height="1" fill="#9cdcfe" fill-opacity="0.45"/><rect x="78" y="130" width="1" height="1" fill="#ffd700"/><rect x="78" y="131" width="1" height="1" fill="#ffd700" fill-opacity="0.45"/><rect x="0" y="132" width="1" height="1" fill="#ffd700"/><rect x="0" y="133" width="1" height="1" fill="#ffd700" fill-opacity="0.45"/><rect x="4" y="134" width="6" height="1" fill="#c586c0"/><rect x="4" y="135" width="6" height="1" fill="#c586c0" fill-opacity="0.45"/><rect x="11" y="134" width="5" height="1" fill="#9cdcfe"/><rect x="11" y="135" width="5" height="1" fill="#9cdcfe" fill-opacity="0.45"/><rect x="16" y="134" width="1" height="1" fill="#cccccc"/><rect x="16" y="135" width="1" height="1" fill="#cccccc" fill-opacity="0.45"/><rect x="0" y="136" width="1" height="1" fill="#ffd700"/><rect x="0" y="137" width="1" height="1" fill="#ffd700" fill-opacity="0.45"/><rect x="0" y="140" width="3" height="1" fill="#569cd6"/><rect x="0" y="141" width="3" height="1" fill="#569cd6" fill-opacity="0.45"/><rect x="4" y="140" width="22" height="1" fill="#4ec9b0"/><rect x="4" y="141" width="22" height="1" fill="#4ec9b0" fill-opacity="0.45"/><rect x="26" y="140" width="2" height="1" fill="#cccccc"/><rect x="26" y="141" width="2" height="1" fill="#cccccc" fill-opacity="0.45"/><rect x="28" y="140" width="17" height="1" fill="#dcdcaa"/><rect x="28" y="141" width="17" height="1" fill="#dcdcaa" fill-opacity="0.45"/><rect x="45" y="140" width="1" height="1" fill="#ffd700"/><rect x="45" y="141" width="1" height="1" fill="#ffd700" fill-opacity="0.45"/><rect x="46" y="140" width="2" height="1" fill="#cccccc"/><rect x="46" y="141" width="2" height="1" fill="#cccccc" fill-opacity="0.45"/><rect x="48" y="140" width="6" height="1" fill="#4ec9b0"/><rect x="48" y="141" width="6" height="1" fill="#4ec9b0" fill-opacity="0.45"/><rect x="54" y="140" width="2" height="1" fill="#cccccc"/><rect x="54" y="141" width="2" height="1" fill="#cccccc" fill-opacity="0.45"/><rect x="56" y="140" width="8" height="1" fill="#4ec9b0"/><rect x="56" y="141" width="8" height="1" fill="#4ec9b0" fill-opacity="0.45"/><rect x="64" y="140" width="2" height="1" fill="#cccccc"/><rect x="64" y="141" width="2" height="1" fill="#cccccc" fill-opacity="0.45"/><rect x="66" y="140" width="8" height="1" fill="#4ec9b0"/><rect x="66" y="141" width="8" height="1" fill="#4ec9b0" fill-opacity="0.45"/><rect x="75" y="140" width="3" height="1" fill="#9cdcfe"/><rect x="75" y="141" width="3" height="1" fill="#9cdcfe" fill-opacity="0.45"/><rect x="78" y="140" width="1" height="1" fill="#cccccc"/><rect x="78" y="141" width="1" height="1" fill="#cccccc" fill-opacity="0.45"/><rect x="80" y="140" width="3" height="1" fill="#569cd6"/><rect x="80" y="141" width="3" height="1" fill="#569cd6" fill-opacity="0.45"/><rect x="84" y="140" width="4" height="1" fill="#9cdcfe"/><rect x="84" y="141" width="4" height="1" fill="#9cdcfe" fill-opacity="0.45"/><rect x="88" y="140" width="1" height="1" fill="#cccccc"/><rect x="88" y="141" width="1" height="1" fill="#cccccc" fill-opacity="0.45"/><rect x="90" y="140" width="5" height="1" fill="#569cd6"/><rect x="90" y="141" width="5" height="1" fill="#569cd6" fill-opacity="0.45"/><rect x="96" y="140" width="5" height="1" fill="#569cd6"/><rect x="96" y="141" width="5" height="1" fill="#569cd6" fill-opacity="0.45"/><rect x="102" y="140" width="7" height="1" fill="#9cdcfe"/><rect x="102" y="141" width="7" height="1" fill="#9cdcfe" fill-opacity="0.45"/><rect x="109" y="140" width="1" height="1" fill="#ffd700"/><rect x="109" y="141" width="1" height="1" fill="#ffd700" fill-opacity="0.45"/><rect x="0" y="142" width="1" height="1" fill="#ffd700"/><rect x="0" y="143" width="1" height="1" fill="#ffd700" fill-opacity="0.45"/><rect x="4" y="144" width="2" height="1" fill="#cccccc"/><rect x="4" y="145" width="2" height="1" fill="#cccccc" fill-opacity="0.45"/><rect x="6" y="144" width="8" height="1" fill="#4ec9b0"/><rect x="6" y="145" width="8" height="1" fill="#4ec9b0" fill-opacity="0.45"/><rect x="14" y="144" width="2" height="1" fill="#cccccc"/><rect x="14" y="145" width="2" height="1" fill="#cccccc" fill-opacity="0.45"/><rect x="16" y="144" width="16" height="1" fill="#4ec9b0"/><rect x="16" y="145" width="16" height="1" fill="#4ec9b0" fill-opacity="0.45"/><rect x="33" y="144" width="5" height="1" fill="#9cdcfe"/><rect x="33" y="145" width="5" height="1" fill="#9cdcfe" fill-opacity="0.45"/><rect x="39" y="144" width="1" height="1" fill="#cccccc"/><rect x="39" y="145" width="1" height="1" fill="#cccccc" fill-opacity="0.45"/><rect x="41" y="144" width="12" height="1" fill="#569cd6"/><rect x="41" y="145" width="12" height="1" fill="#569cd6" fill-opacity="0.45"/><rect x="53" y="144" width="3" height="1" fill="#cccccc"/><rect x="53" y="145" width="3" height="1" fill="#cccccc" fill-opacity="0.45"/><rect x="56" y="144" width="8" height="1" fill="#4ec9b0"/><rect x="56" y="145" width="8" height="1" fill="#4ec9b0" fill-opacity="0.45"/><rect x="64" y="144" width="2" height="1" fill="#cccccc"/><rect x="64" y="145" width="2" height="1" fill="#cccccc" fill-opacity="0.45"/><rect x="66" y="144" width="16" height="1" fill="#4ec9b0"/><rect x="66" y="145" width="16" height="1" fill="#4ec9b0" fill-opacity="0.45"/><rect x="82" y="144" width="1" height="1" fill="#cccccc"/><rect x="82" y="145" width="1" height="1" fill="#cccccc" fill-opacity="0.45"/><rect x="83" y="144" width="1" height="1" fill="#da70d6"/><rect x="83" y="145" width="1" height="1" fill="#da70d6" fill-opacity="0.45"/><rect x="84" y="144" width="1" height="1" fill="#cccccc"/><rect x="84" y="145" width="1" height="1" fill="#cccccc" fill-opacity="0.45"/><rect x="85" y="144" width="3" height="1" fill="#9cdcfe"/><rect x="85" y="145" width="3" height="1" fill="#9cdcfe" fill-opacity="0.45"/><rect x="88" y="144" width="1" height="1" fill="#da70d6"/><rect x="88" y="145" width="1" height="1" fill="#da70d6" fill-opacity="0.45"/><rect x="89" y="144" width="1" height="1" fill="#cccccc"/><rect x="89" y="145" width="1" height="1" fill="#cccccc" fill-opacity="0.45"/><rect x="4" y="146" width="6" height="1" fill="#c586c0"/><rect x="4" y="147" width="6" height="1" fill="#c586c0" fill-opacity="0.45"/><rect x="11" y="146" width="1" height="1" fill="#b5cea8"/><rect x="11" y="147" width="1" height="1" fill="#b5cea8" fill-opacity="0.45"/><rect x="12" y="146" width="1" height="1" fill="#cccccc"/><rect x="12" y="147" width="1" height="1" fill="#cccccc" fill-opacity="0.45"/><rect x="0" y="148" width="1" height="1" fill="#ffd700"/><rect x="0" y="149" width="1" height="1" fill="#ffd700" fill-opacity="0.45"/><rect x="0" y="152" width="3" height="1" fill="#569cd6"/><rect x="0" y="153" width="3" height="1" fill="#569cd6" fill-opacity="0.45"/><rect x="4" y="152" width="22" height="1" fill="#4ec9b0"/><rect x="4" y="153" width="22" height="1" fill="#4ec9b0" fill-opacity="0.45"/><rect x="26" y="152" width="2" height="1" fill="#cccccc"/><rect x="26" y="153" width="2" height="1" fill="#cccccc" fill-opacity="0.45"/><rect x="28" y="152" width="13" height="1" fill="#dcdcaa"/><rect x="28" y="153" width="13" height="1" fill="#dcdcaa" fill-opacity="0.45"/><rect x="41" y="152" width="1" height="1" fill="#ffd700"/><rect x="41" y="153" width="1" height="1" fill="#ffd700" fill-opacity="0.45"/><rect x="42" y="152" width="2" height="1" fill="#cccccc"/><rect x="42" y="153" width="2" height="1" fill="#cccccc" fill-opacity="0.45"/><rect x="44" y="152" width="6" height="1" fill="#4ec9b0"/><rect x="44" y="153" width="6" height="1" fill="#4ec9b0" fill-opacity="0.45"/><rect x="50" y="152" width="2" height="1" fill="#cccccc"/><rect x="50" y="153" width="2" height="1" fill="#cccccc" fill-opacity="0.45"/><rect x="52" y="152" width="8" height="1" fill="#4ec9b0"/><rect x="52" y="153" width="8" height="1" fill="#4ec9b0" fill-opacity="0.45"/><rect x="60" y="152" width="2" height="1" fill="#cccccc"/><rect x="60" y="153" width="2" height="1" fill="#cccccc" fill-opacity="0.45"/><rect x="62" y="152" width="8" height="1" fill="#4ec9b0"/><rect x="62" y="153" width="8" height="1" fill="#4ec9b0" fill-opacity="0.45"/><rect x="71" y="152" width="3" height="1" fill="#9cdcfe"/><rect x="71" y="153" width="3" height="1" fill="#9cdcfe" fill-opacity="0.45"/><rect x="74" y="152" width="1" height="1" fill="#cccccc"/><rect x="74" y="153" width="1" height="1" fill="#cccccc" fill-opacity="0.45"/><rect x="76" y="152" width="3" height="1" fill="#569cd6"/><rect x="76" y="153" width="3" height="1" fill="#569cd6" fill-opacity="0.45"/><rect x="80" y="152" width="4" height="1" fill="#9cdcfe"/><rect x="80" y="153" width="4" height="1" fill="#9cdcfe" fill-opacity="0.45"/><rect x="84" y="152" width="1" height="1" fill="#cccccc"/><rect x="84" y="153" width="1" height="1" fill="#cccccc" fill-opacity="0.45"/><rect x="86" y="152" width="5" height="1" fill="#569cd6"/><rect x="86" y="153" width="5" height="1" fill="#569cd6" fill-opacity="0.45"/><rect x="92" y="152" width="5" height="1" fill="#569cd6"/><rect x="92" y="153" width="5" height="1" fill="#569cd6" fill-opacity="0.45"/><rect x="98" y="152" width="7" height="1" fill="#9cdcfe"/><rect x="98" y="153" width="7" height="1" fill="#9cdcfe" fill-opacity="0.45"/><rect x="105" y="152" width="1" height="1" fill="#ffd700"/><rect x="105" y="153" width="1" height="1" fill="#ffd700" fill-opacity="0.45"/><rect x="0" y="154" width="1" height="1" fill="#ffd700"/><rect x="0" y="155" width="1" height="1" fill="#ffd700" fill-opacity="0.45"/><rect x="4" y="156" width="2" height="1" fill="#cccccc"/><rect x="4" y="157" width="2" height="1" fill="#cccccc" fill-opacity="0.45"/><rect x="6" y="156" width="8" height="1" fill="#4ec9b0"/><rect x="6" y="157" width="8" height="1" fill="#4ec9b0" fill-opacity="0.45"/><rect x="14" y="156" width="2" height="1" fill="#cccccc"/><rect x="14" y="157" width="2" height="1" fill="#cccccc" fill-opacity="0.45"/><rect x="16" y="156" width="12" height="1" fill="#4ec9b0"/><rect x="16" y="157" width="12" height="1" fill="#4ec9b0" fill-opacity="0.45"/><rect x="29" y="156" width="5" height="1" fill="#9cdcfe"/><rect x="29" y="157" width="5" height="1" fill="#9cdcfe" fill-opacity="0.45"/><rect x="35" y="156" width="1" height="1" fill="#cccccc"/><rect x="35" y="157" width="1" height="1" fill="#cccccc" fill-opacity="0.45"/><rect x="37" y="156" width="12" height="1" fill="#569cd6"/><rect x="37" y="157" width="12" height="1" fill="#569cd6" fill-opacity="0.45"/><rect x="49" y="156" width="3" height="1" fill="#cccccc"/><rect x="49" y="157" width="3" height="1" fill="#cccccc" fill-opacity="0.45"/><rect x="52" y="156" width="8" height="1" fill="#4ec9b0"/><rect x="52" y="157" width="8" height="1" fill="#4ec9b0" fill-opacity="0.45"/><rect x="60" y="156" width="2" height="1" fill="#cccccc"/><rect x="60" y="157" width="2" height="1" fill="#cccccc" fill-opacity="0.45"/><rect x="62" y="156" width="12" height="1" fill="#4ec9b0"/><rect x="62" y="157" width="12" height="1" fill="#4ec9b0" fill-opacity="0.45"/><rect x="74" y="156" width="1" height="1" fill="#cccccc"/><rect x="74" y="157" width="1" height="1" fill="#cccccc" fill-opacity="0.45"/><rect x="75" y="156" width="1" height="1" fill="#da70d6"/><rect x="75" y="157" width="1" height="1" fill="#da70d6" fill-opacity="0.45"/><rect x="76" y="156" width="1" height="1" fill="#cccccc"/><rect x="76" y="157" width="1" height="1" fill="#cccccc" fill-opacity="0.45"/><rect x="77" y="156" width="3" height="1" fill="#9cdcfe"/><rect x="77" y="157" width="3" height="1" fill="#9cdcfe" fill-opacity="0.45"/><rect x="80" y="156" width="1" height="1" fill="#da70d6"/><rect x="80" y="157" width="1" height="1" fill="#da70d6" fill-opacity="0.45"/><rect x="81" y="156" width="1" height="1" fill="#cccccc"/><rect x="81" y="157" width="1" height="1" fill="#cccccc" fill-opacity="0.45"/><rect x="4" y="158" width="6" height="1" fill="#c586c0"/><rect x="4" y="159" width="6" height="1" fill="#c586c0" fill-opacity="0.45"/><rect x="11" y="158" width="1" height="1" fill="#b5cea8"/><rect x="11" y="159" width="1" height="1" fill="#b5cea8" fill-opacity="0.45"/><rect x="12" y="158" width="1" height="1" fill="#cccccc"/><rect x="12" y="159" width="1" height="1" fill="#cccccc" fill-opacity="0.45"/><rect x="0" y="160" width="1" height="1" fill="#ffd700"/><rect x="0" y="161" width="1" height="1" fill="#ffd700" fill-opacity="0.45"/><rect x="0" y="164" width="3" height="1" fill="#569cd6"/><rect x="0" y="165" width="3" height="1" fill="#569cd6" fill-opacity="0.45"/><rect x="4" y="164" width="22" height="1" fill="#4ec9b0"/><rect x="4" y="165" width="22" height="1" fill="#4ec9b0" fill-opacity="0.45"/><rect x="26" y="164" width="2" height="1" fill="#cccccc"/><rect x="26" y="165" width="2" height="1" fill="#cccccc" fill-opacity="0.45"/><rect x="28" y="164" width="14" height="1" fill="#dcdcaa"/><rect x="28" y="165" width="14" height="1" fill="#dcdcaa" fill-opacity="0.45"/><rect x="42" y="164" width="1" height="1" fill="#ffd700"/><rect x="42" y="165" width="1" height="1" fill="#ffd700" fill-opacity="0.45"/><rect x="43" y="164" width="2" height="1" fill="#cccccc"/><rect x="43" y="165" width="2" height="1" fill="#cccccc" fill-opacity="0.45"/><rect x="45" y="164" width="6" height="1" fill="#4ec9b0"/><rect x="45" y="165" width="6" height="1" fill="#4ec9b0" fill-opacity="0.45"/><rect x="51" y="164" width="2" height="1" fill="#cccccc"/><rect x="51" y="165" width="2" height="1" fill="#cccccc" fill-opacity="0.45"/><rect x="53" y="164" width="8" height="1" fill="#4ec9b0"/><rect x="53" y="165" width="8" height="1" fill="#4ec9b0" fill-opacity="0.45"/><rect x="61" y="164" width="2" height="1" fill="#cccccc"/><rect x="61" y="165" width="2" height="1" fill="#cccccc" fill-opacity="0.45"/><rect x="63" y="164" width="8" height="1" fill="#4ec9b0"/><rect x="63" y="165" width="8" height="1" fill="#4ec9b0" fill-opacity="0.45"/><rect x="72" y="164" width="3" height="1" fill="#9cdcfe"/><rect x="72" y="165" width="3" height="1" fill="#9cdcfe" fill-opacity="0.45"/><rect x="75" y="164" width="1" height="1" fill="#cccccc"/><rect x="75" y="165" width="1" height="1" fill="#cccccc" fill-opacity="0.45"/><rect x="77" y="164" width="3" height="1" fill="#569cd6"/><rect x="77" y="165" width="3" height="1" fill="#569cd6" fill-opacity="0.45"/><rect x="81" y="164" width="4" height="1" fill="#9cdcfe"/><rect x="81" y="165" width="4" height="1" fill="#9cdcfe" fill-opacity="0.45"/><rect x="85" y="164" width="1" height="1" fill="#cccccc"/><rect x="85" y="165" width="1" height="1" fill="#cccccc" fill-opacity="0.45"/><rect x="87" y="164" width="5" height="1" fill="#569cd6"/><rect x="87" y="165" width="5" height="1" fill="#569cd6" fill-opacity="0.45"/><rect x="93" y="164" width="5" height="1" fill="#569cd6"/><rect x="93" y="165" width="5" height="1" fill="#569cd6" fill-opacity="0.45"/><rect x="99" y="164" width="7" height="1" fill="#9cdcfe"/><rect x="99" y="165" width="7" height="1" fill="#9cdcfe" fill-opacity="0.45"/><rect x="106" y="164" width="1" height="1" fill="#ffd700"/><rect x="106" y="165" width="1" height="1" fill="#ffd700" fill-opacity="0.45"/><rect x="0" y="166" width="1" height="1" fill="#ffd700"/><rect x="0" y="167" width="1" height="1" fill="#ffd700" fill-opacity="0.45"/><rect x="4" y="168" width="2" height="1" fill="#cccccc"/><rect x="4" y="169" width="2" height="1" fill="#cccccc" fill-opacity="0.45"/><rect x="6" y="168" width="8" height="1" fill="#4ec9b0"/><rect x="6" y="169" width="8" height="1" fill="#4ec9b0" fill-opacity="0.45"/><rect x="14" y="168" width="2" height="1" fill="#cccccc"/><rect x="14" y="169" width="2" height="1" fill="#cccccc" fill-opacity="0.45"/><rect x="16" y="168" width="13" height="1" fill="#4ec9b0"/><rect x="16" y="169" width="13" height="1" fill="#4ec9b0" fill-opacity="0.45"/><rect x="30" y="168" width="5" height="1" fill="#9cdcfe"/><rect x="30" y="169" width="5" height="1" fill="#9cdcfe" fill-opacity="0.45"/><rect x="36" y="168" width="1" height="1" fill="#cccccc"/><rect x="36" y="169" width="1" height="1" fill="#cccccc" fill-opacity="0.45"/><rect x="38" y="168" width="12" height="1" fill="#569cd6"/><rect x="38" y="169" width="12" height="1" fill="#569cd6" fill-opacity="0.45"/><rect x="50" y="168" width="3" height="1" fill="#cccccc"/><rect x="50" y="169" width="3" height="1" fill="#cccccc" fill-opacity="0.45"/><rect x="53" y="168" width="8" height="1" fill="#4ec9b0"/><rect x="53" y="169" width="8" height="1" fill="#4ec9b0" fill-opacity="0.45"/><rect x="61" y="168" width="2" height="1" fill="#cccccc"/><rect x="61" y="169" width="2" height="1" fill="#cccccc" fill-opacity="0.45"/><rect x="63" y="168" width="13" height="1" fill="#4ec9b0"/><rect x="63" y="169" width="13" height="1" fill="#4ec9b0" fill-opacity="0.45"/><rect x="76" y="168" width="1" height="1" fill="#cccccc"/><rect x="76" y="169" width="1" height="1" fill="#cccccc" fill-opacity="0.45"/><rect x="77" y="168" width="1" height="1" fill="#da70d6"/><rect x="77" y="169" width="1" height="1" fill="#da70d6" fill-opacity="0.45"/><rect x="78" y="168" width="1" height="1" fill="#cccccc"/><rect x="78" y="169" width="1" height="1" fill="#cccccc" fill-opacity="0.45"/><rect x="79" y="168" width="3" height="1" fill="#9cdcfe"/><rect x="79" y="169" width="3" height="1" fill="#9cdcfe" fill-opacity="0.45"/><rect x="82" y="168" width="1" height="1" fill="#da70d6"/><rect x="82" y="169" width="1" height="1" fill="#da70d6" fill-opacity="0.45"/><rect x="83" y="168" width="1" height="1" fill="#cccccc"/><rect x="83" y="169" width="1" height="1" fill="#cccccc" fill-opacity="0.45"/><rect x="4" y="170" width="6" height="1" fill="#c586c0"/><rect x="4" y="171" width="6" height="1" fill="#c586c0" fill-opacity="0.45"/><rect x="11" y="170" width="1" height="1" fill="#b5cea8"/><rect x="11" y="171" width="1" height="1" fill="#b5cea8" fill-opacity="0.45"/><rect x="12" y="170" width="1" height="1" fill="#cccccc"/><rect x="12" y="171" width="1" height="1" fill="#cccccc" fill-opacity="0.45"/><rect x="0" y="172" width="1" height="1" fill="#ffd700"/><rect x="0" y="173" width="1" height="1" fill="#ffd700" fill-opacity="0.45"/></svg>
      <div class="abs" style="left:8px;top:14px;width:25px;height:2px;background:#ff1212"></div>
      <div class="abs" style="left:33px;top:14px;width:87px;height:2px;background:#7a1818"></div>
    </div>
    <div class="abs" style="left:1164px;top:0;width:6px;height:100%;box-shadow:#000 -6px 0 6px -6px inset"></div>
    <div class="abs" style="left:1290px;top:0;width:14px;height:100%;border-left:1px solid #010409;border-top:1px solid #010409"></div>
    <div class="abs" style="left:1300px;top:58px;width:4px;height:8px;background:#d01c1c"></div>
    <div class="abs" style="left:0;top:0;width:1170px;height:6px;box-shadow:#000 0 6px 6px -6px inset"></div>
  </div>
</div>
<div class="abs" style="left:1285px;top:0;width:1px;height:1307px;background:#2b2b2b"></div>
<div class="grp" style="left:1286px;width:941px">
  <div class="tabs"></div>
  <div class="tab" style="left:0;width:165px">
    <svg class="abs" style="left:15px;top:7px" width="10" height="11" viewBox="0 0 10 11"><path d="M2 0 H8.5 V2.5 H3 V7.5 H8.5 V10 H2 L0.5 8.5 V1.5 Z" fill="#a074c4"/></svg>
    <div class="tl" style="left:32px">dmconfig.msg.h</div>
    <div class="tl" style="left:129px;font-size:12px">4</div>
    <svg class="abs" style="left:146px;top:8px" width="9" height="9" viewBox="0 0 9 9"><path d="M0.5 0.5 L8.5 8.5 M8.5 0.5 L0.5 8.5" stroke="#e0e0e0" stroke-width="1.2"/></svg>
  </div>
  <div class="bc"><div class="bt" style="left:15px">D:</div><svg class="abs" style="left:31px;top:6px" width="7" height="11" viewBox="0 0 7 11"><path d="M1 0.5 L6 5.5 L1 10.5" fill="none" stroke="#a0a0a0" stroke-width="1"/></svg><div class="bt" style="left:43px">home</div><svg class="abs" style="left:79px;top:6px" width="7" height="11" viewBox="0 0 7 11"><path d="M1 0.5 L6 5.5 L1 10.5" fill="none" stroke="#a0a0a0" stroke-width="1"/></svg><div class="bt" style="left:92px">git</div><svg class="abs" style="left:112px;top:6px" width="7" height="11" viewBox="0 0 7 11"><path d="M1 0.5 L6 5.5 L1 10.5" fill="none" stroke="#a0a0a0" stroke-width="1"/></svg><div class="bt" style="left:123px">private_github</div><svg class="abs" style="left:210px;top:6px" width="7" height="11" viewBox="0 0 7 11"><path d="M1 0.5 L6 5.5 L1 10.5" fill="none" stroke="#a0a0a0" stroke-width="1"/></svg><div class="bt" style="left:221px">dmconfig</div><svg class="abs" style="left:281px;top:6px" width="7" height="11" viewBox="0 0 7 11"><path d="M1 0.5 L6 5.5 L1 10.5" fill="none" stroke="#a0a0a0" stroke-width="1"/></svg><div class="bt" style="left:292px">test</div><svg class="abs" style="left:319px;top:6px" width="7" height="11" viewBox="0 0 7 11"><path d="M1 0.5 L6 5.5 L1 10.5" fill="none" stroke="#a0a0a0" stroke-width="1"/></svg><div class="bt" style="left:330px">dmconfigtest</div><svg class="abs" style="left:411px;top:6px" width="7" height="11" viewBox="0 0 7 11"><path d="M1 0.5 L6 5.5 L1 10.5" fill="none" stroke="#a0a0a0" stroke-width="1"/></svg><svg class="abs" style="left:427px;top:7px" width="10" height="11" viewBox="0 0 10 11"><path d="M2 0 H8.5 V2.5 H3 V7.5 H8.5 V10 H2 L0.5 8.5 V1.5 Z" fill="#a074c4"/></svg><div class="bt" style="left:443px">dmconfig.msg.h</div><svg class="abs" style="left:541px;top:6px" width="7" height="11" viewBox="0 0 7 11"><path d="M1 0.5 L6 5.5 L1 10.5" fill="none" stroke="#a0a0a0" stroke-width="1"/></svg><svg class="abs" style="left:549px;top:0px" width="20" height="22" viewBox="0 0 20 22"><path d="M8.5 4.4 L10.6 6.5 L6.4 10.6 L4.3 8.5 Z" fill="none" stroke="#ee9d28" stroke-width="1"/><path d="M8.3 9.6 V15.5 H13.5 M8.3 10.3 H13.5" fill="none" stroke="#ee9d28" stroke-width="1.1"/><path d="M15.5 8.3 L17.7 10.5 L15.5 12.7 L13.3 10.5 Z M15.5 13.3 L17.7 15.5 L15.5 17.7 L13.3 15.5 Z" fill="#ee9d28"/><path d="M15.5 10 L16 10.5 L15.5 11 L15 10.5 Z M15.5 15 L16 15.5 L15.5 16 L15 15.5 Z" fill="#1f1f1f"/></svg><div class="bt" style="left:571px">CDMDispatcher_dmconfig</div></div>
  <div class="ed">
    <div class="abs" style="left:68px;top:627px;width:2000px;height:19px;border-top:1px solid #282828;border-bottom:1px solid #282828"></div>
    <div class="abs" style="left:68px;top:608px;width:8px;height:19px;border:1px solid #888888;background:#0064001a"></div>
    <div class="abs" style="left:68px;top:931px;width:8px;height:19px;border:1px solid #888888;background:#0064001a"></div>
    <div class="ln" style="top:0px;left:-8px;color:#6e7681">1</div><div class="cl" style="top:0px;left:68px"><span style="color:#6a9955">/<span class="ast">********************************************************************</span></span></div><div class="ln" style="top:19px;left:-8px;color:#6e7681">2</div><div class="cl" style="top:19px;left:68px"><span style="color:#6a9955"><span class="ast">**</span>       This head file is generated by program,                   <span class="ast">**</span></span></div><div class="ln" style="top:38px;left:-8px;color:#6e7681">3</div><div class="cl" style="top:38px;left:68px"><span style="color:#6a9955"><span class="ast">**</span>            Please do not change it directly.                    <span class="ast">**</span></span></div><div class="ln" style="top:57px;left:-8px;color:#6e7681">4</div><div class="cl" style="top:57px;left:68px"><span style="color:#6a9955"><span class="ast">**</span>                   Auther: brinkqiang                            <span class="ast">**</span></span></div><div class="ln" style="top:76px;left:-8px;color:#6e7681">5</div><div class="cl" style="top:76px;left:68px"><span style="color:#6a9955"><span class="ast">********************************************************************</span>/</span></div><div class="ln" style="top:95px;left:-8px;color:#6e7681">6</div><div class="cl" style="top:95px;left:68px"><span style="color:#6a9955">// source: dmconfig.proto</span></div><div class="ln" style="top:114px;left:-8px;color:#6e7681">7</div><div class="cl" style="top:114px;left:68px"><span style="color:#6a9955">/<span class="ast">********************************************************************</span></span></div><div class="ln" style="top:133px;left:-8px;color:#6e7681">8</div><div class="cl" style="top:133px;left:68px"><span style="color:#6a9955">// sample</span></div><div class="ln" style="top:152px;left:-8px;color:#6e7681">9</div><div class="cl" style="top:152px;left:68px"><span style="color:#6a9955">#include &quot;dmconfig.msg.h&quot;</span></div><div class="ln" style="top:171px;left:-8px;color:#6e7681">10</div><div class="cl" style="top:171px;left:68px"><span style="color:#6a9955">class MyCDMDispatcher_dmconfig : public CDMDispatcher_dmconfig</span></div><div class="ln" style="top:190px;left:-8px;color:#6e7681">11</div><div class="cl" style="top:190px;left:68px"><span style="color:#6a9955">{</span></div><div class="ln" style="top:209px;left:-8px;color:#6e7681">12</div><div class="cl" style="top:209px;left:68px"><span style="color:#6a9955">public:</span></div><div class="ln" style="top:228px;left:-8px;color:#6e7681">13</div><div class="g" style="top:228px;left:68px;background:#404040"></div><div class="cl" style="top:228px;left:68px"><span style="color:#6a9955">    virtual ~MyCDMDispatcher_dmconfig(){}</span></div><div class="ln" style="top:247px;left:-8px;color:#6e7681">14</div><div class="g" style="top:247px;left:68px;background:#404040"></div><div class="cl" style="top:247px;left:68px"><span style="color:#6a9955"></span></div><div class="ln" style="top:266px;left:-8px;color:#6e7681">15</div><div class="g" style="top:266px;left:68px;background:#404040"></div><div class="cl" style="top:266px;left:68px"><span style="color:#6a9955">    virtual int Ondmnode_property(::google::protobuf::Message&amp; msg, int nLen, const void<span class="ast">*</span> pObject){ return 0;}</span></div><div class="ln" style="top:285px;left:-8px;color:#6e7681">16</div><div class="g" style="top:285px;left:68px;background:#404040"></div><div class="cl" style="top:285px;left:68px"><span style="color:#6a9955">    virtual int Ondmnode_item(::google::protobuf::Message&amp; msg, int nLen, const void<span class="ast">*</span> pObject){ return 0;}</span></div><div class="ln" style="top:304px;left:-8px;color:#6e7681">17</div><div class="g" style="top:304px;left:68px;background:#404040"></div><div class="cl" style="top:304px;left:68px"><span style="color:#6a9955">    virtual int Ondmnode_item2(::google::protobuf::Message&amp; msg, int nLen, const void<span class="ast">*</span> pObject){ return 0;}</span></div><div class="ln" style="top:323px;left:-8px;color:#6e7681">18</div><div class="cl" style="top:323px;left:68px"><span style="color:#6a9955">};</span></div><div class="ln" style="top:342px;left:-8px;color:#6e7681">19</div><div class="cl" style="top:342px;left:68px"><span style="color:#6a9955"><span class="ast">********************************************************************</span>/</span></div><div class="ln" style="top:361px;left:-8px;color:#6e7681">20</div><div class="cl" style="top:361px;left:68px"><span style="color:#c586c0">#ifndef</span> <span style="color:#569cd6">__DMCONFIG_MSG_H__</span></div><div class="ln" style="top:380px;left:-8px;color:#6e7681">21</div><div class="cl" style="top:380px;left:68px"><span style="color:#c586c0">#define</span> <span style="color:#569cd6">__DMCONFIG_MSG_H__</span></div><div class="ln" style="top:399px;left:-8px;color:#6e7681">22</div><div class="cl" style="top:399px;left:68px"></div><div class="ln" style="top:418px;left:-8px;color:#6e7681">23</div><div class="cl" style="top:418px;left:68px"><span style="color:#c586c0">#include</span> <span style="color:#ce9178">&lt;string&gt;</span></div><div class="ln" style="top:437px;left:-8px;color:#6e7681">24</div><div class="cl" style="top:437px;left:68px"></div><div class="ln" style="top:456px;left:-8px;color:#6e7681">25</div><div class="cl" style="top:456px;left:68px"><span style="color:#c586c0">#include</span> <span style="color:#ce9178">&lt;google/protobuf/message.h&gt;</span></div><div class="ln" style="top:475px;left:-8px;color:#6e7681">26</div><div class="cl" style="top:475px;left:68px"><span style="color:#c586c0">#include</span> <span style="color:#ce9178">&quot;msgdispatcher.sys.h&quot;</span></div><div class="ln" style="top:494px;left:-8px;color:#6e7681">27</div><div class="cl" style="top:494px;left:68px"><span style="color:#c586c0">#include</span> <span style="color:#ce9178">&quot;dmconfig.pb.h&quot;</span></div><div class="ln" style="top:513px;left:-8px;color:#6e7681">28</div><div class="cl" style="top:513px;left:68px"></div><div class="ln" style="top:532px;left:-8px;color:#6e7681">29</div><div class="cl" style="top:532px;left:68px"></div><div class="ln" style="top:551px;left:-8px;color:#6e7681">30</div><div class="cl" style="top:551px;left:68px"><span style="color:#6a9955">// -------------------------------------------------------------------</span></div><div class="ln" style="top:570px;left:-8px;color:#6e7681">31</div><div class="cl" style="top:570px;left:68px"></div><div class="ln" style="top:589px;left:-8px;color:#6e7681">32</div><div class="cl" style="top:589px;left:68px"><span style="color:#569cd6">class </span><span style="color:#4ec9b0">CDMDispatcher_dmconfig </span><span style="color:#cccccc">: </span><span style="color:#569cd6">public </span><span style="color:#4ec9b0">TMsgDispatcherPB</span><span style="color:#cccccc">&lt;</span><span style="color:#4ec9b0">CDMDispatcher_dmconfig</span><span style="color:#cccccc">&gt;</span></div><div class="ln" style="top:608px;left:-8px;color:#6e7681">33</div><div class="cl" style="top:608px;left:68px"><span style="color:#ffd700">{</span></div><div class="ln" style="top:627px;left:-8px;color:#cccccc">34</div><div class="cl" style="top:627px;left:68px"><span style="color:#569cd6">public:</span></div><div class="ln" style="top:646px;left:-8px;color:#6e7681">35</div><div class="g" style="top:646px;left:68px;background:#707070"></div><div class="cl" style="top:646px;left:68px">    <span style="color:#dcdcaa">CDMDispatcher_dmconfig</span><span style="color:#da70d6">(){}</span></div><div class="ln" style="top:665px;left:-8px;color:#6e7681">36</div><div class="g" style="top:665px;left:68px;background:#707070"></div><div class="cl" style="top:665px;left:68px">    <span style="color:#569cd6">virtual </span><span style="color:#dcdcaa">~CDMDispatcher_dmconfig</span><span style="color:#da70d6">(){}</span></div><div class="ln" style="top:684px;left:-8px;color:#6e7681">37</div><div class="g" style="top:684px;left:68px;background:#707070"></div><div class="cl" style="top:684px;left:68px"></div><div class="ln" style="top:703px;left:-8px;color:#6e7681">38</div><div class="g" style="top:703px;left:68px;background:#707070"></div><div class="cl" style="top:703px;left:68px">    <span style="color:#569cd6">bool </span><span style="color:#dcdcaa">Init</span><span style="color:#da70d6">()</span><span style="color:#cccccc">;</span></div><div class="ln" style="top:722px;left:-8px;color:#6e7681">39</div><div class="g" style="top:722px;left:68px;background:#707070"></div><div class="cl" style="top:722px;left:68px"></div><div class="ln" style="top:741px;left:-8px;color:#6e7681">40</div><div class="g" style="top:741px;left:68px;background:#707070"></div><div class="cl" style="top:741px;left:68px">    <span style="color:#569cd6">int </span><span style="color:#dcdcaa">NetCall</span><span style="color:#da70d6">(</span><span style="color:#4ec9b0">uint16_t </span><span style="color:#9cdcfe">wMsgID</span><span style="color:#cccccc">, </span><span style="color:#569cd6">void<span class="ast">*</span> </span><span style="color:#9cdcfe">pData</span><span style="color:#cccccc">, </span><span style="color:#569cd6">int </span><span style="color:#9cdcfe">nLen</span><span style="color:#cccccc">, </span><span style="color:#569cd6">const void<span class="ast">*</span> </span><span style="color:#9cdcfe">pObject</span><span style="color:#da70d6">)</span><span style="color:#cccccc">;</span></div><div class="ln" style="top:760px;left:-8px;color:#6e7681">41</div><div class="g" style="top:760px;left:68px;background:#707070"></div><div class="cl" style="top:760px;left:68px"></div><div class="ln" style="top:779px;left:-8px;color:#6e7681">42</div><div class="g" style="top:779px;left:68px;background:#707070"></div><div class="cl" style="top:779px;left:68px"><span style="color:#cccccc">    ::</span><span style="color:#4ec9b0">google</span><span style="color:#cccccc">::</span><span style="color:#4ec9b0">protobuf</span><span style="color:#cccccc">::</span><span style="color:#4ec9b0">Message<span class="ast">*</span> </span><span style="color:#dcdcaa">CreateMessage</span><span style="color:#da70d6">(</span><span style="color:#4ec9b0">uint16_t </span><span style="color:#9cdcfe">wMsgID</span><span style="color:#da70d6">)</span><span style="color:#cccccc">;</span></div><div class="ln" style="top:798px;left:-8px;color:#6e7681">43</div><div class="g" style="top:798px;left:68px;background:#707070"></div><div class="cl" style="top:798px;left:68px">    <span style="color:#569cd6">void </span><span style="color:#dcdcaa">ReleaseMessage</span><span style="color:#da70d6">(</span><span style="color:#cccccc">::</span><span style="color:#4ec9b0">google</span><span style="color:#cccccc">::</span><span style="color:#4ec9b0">protobuf</span><span style="color:#cccccc">::</span><span style="color:#4ec9b0">Message<span class="ast">*</span> </span><span style="color:#9cdcfe">poMsg</span><span style="color:#da70d6">)</span><span style="color:#cccccc">;</span></div><div class="ln" style="top:817px;left:-8px;color:#6e7681">44</div><div class="g" style="top:817px;left:68px;background:#707070"></div><div class="cl" style="top:817px;left:68px"></div><div class="ln" style="top:836px;left:-8px;color:#6e7681">45</div><div class="cl" style="top:836px;left:68px"><span style="color:#569cd6">public:</span></div><div class="ln" style="top:855px;left:-8px;color:#6e7681">46</div><div class="g" style="top:855px;left:68px;background:#404040"></div><div class="cl" style="top:855px;left:68px"></div><div class="ln" style="top:874px;left:-8px;color:#6e7681">47</div><div class="g" style="top:874px;left:68px;background:#404040"></div><div class="cl" style="top:874px;left:68px">    <span style="color:#569cd6">virtual int </span><span style="color:#dcdcaa">Ondmnode_property</span><span style="color:#da70d6">(</span><span style="color:#cccccc">::</span><span style="color:#4ec9b0">google</span><span style="color:#cccccc">::</span><span style="color:#4ec9b0">protobuf</span><span style="color:#cccccc">::</span><span style="color:#4ec9b0">Message&amp; </span><span style="color:#9cdcfe">msg</span><span style="color:#cccccc">, </span><span style="color:#569cd6">int </span><span style="color:#9cdcfe">nLen</span><span style="color:#cccccc">, </span><span style="color:#569cd6">const void<span class="ast">*</span> </span><span style="color:#9cdcfe">pObject</span><span style="color:#da70d6">)</span><span style="color:#cccccc">;</span></div><div class="ln" style="top:893px;left:-8px;color:#6e7681">48</div><div class="g" style="top:893px;left:68px;background:#404040"></div><div class="cl" style="top:893px;left:68px">    <span style="color:#569cd6">virtual int </span><span style="color:#dcdcaa">Ondmnode_item</span><span style="color:#da70d6">(</span><span style="color:#cccccc">::</span><span style="color:#4ec9b0">google</span><span style="color:#cccccc">::</span><span style="color:#4ec9b0">protobuf</span><span style="color:#cccccc">::</span><span style="color:#4ec9b0">Message&amp; </span><span style="color:#9cdcfe">msg</span><span style="color:#cccccc">, </span><span style="color:#569cd6">int </span><span style="color:#9cdcfe">nLen</span><span style="color:#cccccc">, </span><span style="color:#569cd6">const void<span class="ast">*</span> </span><span style="color:#9cdcfe">pObject</span><span style="color:#da70d6">)</span><span style="color:#cccccc">;</span></div><div class="ln" style="top:912px;left:-8px;color:#6e7681">49</div><div class="g" style="top:912px;left:68px;background:#404040"></div><div class="cl" style="top:912px;left:68px">    <span style="color:#569cd6">virtual int </span><span style="color:#dcdcaa">Ondmnode_item2</span><span style="color:#da70d6">(</span><span style="color:#cccccc">::</span><span style="color:#4ec9b0">google</span><span style="color:#cccccc">::</span><span style="color:#4ec9b0">protobuf</span><span style="color:#cccccc">::</span><span style="color:#4ec9b0">Message&amp; </span><span style="color:#9cdcfe">msg</span><span style="color:#cccccc">, </span><span style="color:#569cd6">int </span><span style="color:#9cdcfe">nLen</span><span style="color:#cccccc">, </span><span style="color:#569cd6">const void<span class="ast">*</span> </span><span style="color:#9cdcfe">pObject</span><span style="color:#da70d6">)</span><span style="color:#cccccc">;</span></div><div class="ln" style="top:931px;left:-8px;color:#6e7681">50</div><div class="cl" style="top:931px;left:68px"><span style="color:#ffd700">}</span><span style="color:#cccccc">;</span></div><div class="ln" style="top:950px;left:-8px;color:#6e7681">51</div><div class="cl" style="top:950px;left:68px"></div><div class="ln" style="top:969px;left:-8px;color:#6e7681">52</div><div class="cl" style="top:969px;left:68px"></div><div class="ln" style="top:988px;left:-8px;color:#6e7681">53</div><div class="cl" style="top:988px;left:68px"><span style="color:#569cd6">template</span><span style="color:#cccccc">&lt;&gt;</span></div><div class="ln" style="top:1007px;left:-8px;color:#6e7681">54</div><div class="cl" style="top:1007px;left:68px"><span style="color:#569cd6">inline </span><span style="color:#4ec9b0">uint16_t </span><span style="color:#dcdcaa">GetMsgID</span><span style="color:#cccccc">&lt;::</span><span style="color:#4ec9b0">dmconfig</span><span style="color:#cccccc">::</span><span style="color:#4ec9b0">dmnode_property</span><span style="color:#cccccc">&gt;</span><span style="color:#ffd700">()</span></div><div class="ln" style="top:1026px;left:-8px;color:#6e7681">55</div><div class="cl" style="top:1026px;left:68px"><span style="color:#ffd700">{</span></div><div class="ln" style="top:1045px;left:-8px;color:#6e7681">56</div><div class="g" style="top:1045px;left:68px;background:#404040"></div><div class="cl" style="top:1045px;left:68px">    <span style="color:#c586c0">return </span><span style="color:#cccccc">::</span><span style="color:#4ec9b0">dmconfig</span><span style="color:#cccccc">::</span><span style="color:#4ec9b0">MSGID</span><span style="color:#cccccc">::MSGID_dmnode_property;</span></div><div class="ln" style="top:1064px;left:-8px;color:#6e7681">57</div><div class="cl" style="top:1064px;left:68px"><span style="color:#ffd700">}</span></div><div class="ln" style="top:1083px;left:-8px;color:#6e7681">58</div><div class="cl" style="top:1083px;left:68px"></div><div class="ln" style="top:1102px;left:-8px;color:#6e7681">59</div><div class="cl" style="top:1102px;left:68px"><span style="color:#569cd6">template</span><span style="color:#cccccc">&lt;&gt;</span></div><div class="ln" style="top:1121px;left:-8px;color:#6e7681">60</div><div class="cl" style="top:1121px;left:68px"><span style="color:#569cd6">inline </span><span style="color:#4ec9b0">uint16_t </span><span style="color:#dcdcaa">GetMsgID</span><span style="color:#cccccc">&lt;::</span><span style="color:#4ec9b0">dmconfig</span><span style="color:#cccccc">::</span><span style="color:#4ec9b0">dmnode_item</span><span style="color:#cccccc">&gt;</span><span style="color:#ffd700">()</span></div><div class="ln" style="top:1140px;left:-8px;color:#6e7681">61</div><div class="cl" style="top:1140px;left:68px"><span style="color:#ffd700">{</span></div><div class="ln" style="top:1159px;left:-8px;color:#6e7681">62</div><div class="g" style="top:1159px;left:68px;background:#404040"></div><div class="cl" style="top:1159px;left:68px">    <span style="color:#c586c0">return </span><span style="color:#cccccc">::</span><span style="color:#4ec9b0">dmconfig</span><span style="color:#cccccc">::</span><span style="color:#4ec9b0">MSGID</span><span style="color:#cccccc">::MSGID_dmnode_item;</span></div><div class="ln" style="top:1178px;left:-8px;color:#6e7681">63</div><div class="cl" style="top:1178px;left:68px"><span style="color:#ffd700">}</span></div><div class="ln" style="top:1197px;left:-8px;color:#6e7681">64</div><div class="cl" style="top:1197px;left:68px"></div><div class="ln" style="top:1216px;left:-8px;color:#6e7681">65</div><div class="cl" style="top:1216px;left:68px"><span style="color:#569cd6">template</span><span style="color:#cccccc">&lt;&gt;</span></div><div class="ln" style="top:1235px;left:-8px;color:#6e7681">66</div><div class="cl" style="top:1235px;left:68px"><span style="color:#569cd6">inline </span><span style="color:#4ec9b0">uint16_t </span><span style="color:#dcdcaa">GetMsgID</span><span style="color:#cccccc">&lt;::</span><span style="color:#4ec9b0">dmconfig</span><span style="color:#cccccc">::</span><span style="color:#4ec9b0">dmnode_item2</span><span style="color:#cccccc">&gt;</span><span style="color:#ffd700">()</span></div>
    <svg class="sq" style="left:68px;top:472px" width="288" height="3"><g fill="#f14c4c"><polygon points="5.5,0.0 2.5,3.0 1.1,3.0 4.1,0.0"/><polygon points="4.0,0.0 6.0,2.0 6.0,0.6 5.4,0.0"/><polygon points="0.0,2.0 1.0,3.0 2.4,3.0 0.0,0.6"/><polygon points="11.5,0.0 8.5,3.0 7.1,3.0 10.1,0.0"/><polygon points="10.0,0.0 12.0,2.0 12.0,0.6 11.4,0.0"/><polygon points="6.0,2.0 7.0,3.0 8.4,3.0 6.0,0.6"/><polygon points="17.5,0.0 14.5,3.0 13.1,3.0 16.1,0.0"/><polygon points="16.0,0.0 18.0,2.0 18.0,0.6 17.4,0.0"/><polygon points="12.0,2.0 13.0,3.0 14.4,3.0 12.0,0.6"/><polygon points="23.5,0.0 20.5,3.0 19.1,3.0 22.1,0.0"/><polygon points="22.0,0.0 24.0,2.0 24.0,0.6 23.4,0.0"/><polygon points="18.0,2.0 19.0,3.0 20.4,3.0 18.0,0.6"/><polygon points="29.5,0.0 26.5,3.0 25.1,3.0 28.1,0.0"/><polygon points="28.0,0.0 30.0,2.0 30.0,0.6 29.4,0.0"/><polygon points="24.0,2.0 25.0,3.0 26.4,3.0 24.0,0.6"/><polygon points="35.5,0.0 32.5,3.0 31.1,3.0 34.1,0.0"/><polygon points="34.0,0.0 36.0,2.0 36.0,0.6 35.4,0.0"/><polygon points="30.0,2.0 31.0,3.0 32.4,3.0 30.0,0.6"/><polygon points="41.5,0.0 38.5,3.0 37.1,3.0 40.1,0.0"/><polygon points="40.0,0.0 42.0,2.0 42.0,0.6 41.4,0.0"/><polygon points="36.0,2.0 37.0,3.0 38.4,3.0 36.0,0.6"/><polygon points="47.5,0.0 44.5,3.0 43.1,3.0 46.1,0.0"/><polygon points="46.0,0.0 48.0,2.0 48.0,0.6 47.4,0.0"/><polygon points="42.0,2.0 43.0,3.0 44.4,3.0 42.0,0.6"/><polygon points="53.5,0.0 50.5,3.0 49.1,3.0 52.1,0.0"/><polygon points="52.0,0.0 54.0,2.0 54.0,0.6 53.4,0.0"/><polygon points="48.0,2.0 49.0,3.0 50.4,3.0 48.0,0.6"/><polygon points="59.5,0.0 56.5,3.0 55.1,3.0 58.1,0.0"/><polygon points="58.0,0.0 60.0,2.0 60.0,0.6 59.4,0.0"/><polygon points="54.0,2.0 55.0,3.0 56.4,3.0 54.0,0.6"/><polygon points="65.5,0.0 62.5,3.0 61.1,3.0 64.1,0.0"/><polygon points="64.0,0.0 66.0,2.0 66.0,0.6 65.4,0.0"/><polygon points="60.0,2.0 61.0,3.0 62.4,3.0 60.0,0.6"/><polygon points="71.5,0.0 68.5,3.0 67.1,3.0 70.1,0.0"/><polygon points="70.0,0.0 72.0,2.0 72.0,0.6 71.4,0.0"/><polygon points="66.0,2.0 67.0,3.0 68.4,3.0 66.0,0.6"/><polygon points="77.5,0.0 74.5,3.0 73.1,3.0 76.1,0.0"/><polygon points="76.0,0.0 78.0,2.0 78.0,0.6 77.4,0.0"/><polygon points="72.0,2.0 73.0,3.0 74.4,3.0 72.0,0.6"/><polygon points="83.5,0.0 80.5,3.0 79.1,3.0 82.1,0.0"/><polygon points="82.0,0.0 84.0,2.0 84.0,0.6 83.4,0.0"/><polygon points="78.0,2.0 79.0,3.0 80.4,3.0 78.0,0.6"/><polygon points="89.5,0.0 86.5,3.0 85.1,3.0 88.1,0.0"/><polygon points="88.0,0.0 90.0,2.0 90.0,0.6 89.4,0.0"/><polygon points="84.0,2.0 85.0,3.0 86.4,3.0 84.0,0.6"/><polygon points="95.5,0.0 92.5,3.0 91.1,3.0 94.1,0.0"/><polygon points="94.0,0.0 96.0,2.0 96.0,0.6 95.4,0.0"/><polygon points="90.0,2.0 91.0,3.0 92.4,3.0 90.0,0.6"/><polygon points="101.5,0.0 98.5,3.0 97.1,3.0 100.1,0.0"/><polygon points="100.0,0.0 102.0,2.0 102.0,0.6 101.4,0.0"/><polygon points="96.0,2.0 97.0,3.0 98.4,3.0 96.0,0.6"/><polygon points="107.5,0.0 104.5,3.0 103.1,3.0 106.1,0.0"/><polygon points="106.0,0.0 108.0,2.0 108.0,0.6 107.4,0.0"/><polygon points="102.0,2.0 103.0,3.0 104.4,3.0 102.0,0.6"/><polygon points="113.5,0.0 110.5,3.0 109.1,3.0 112.1,0.0"/><polygon points="112.0,0.0 114.0,2.0 114.0,0.6 113.4,0.0"/><polygon points="108.0,2.0 109.0,3.0 110.4,3.0 108.0,0.6"/><polygon points="119.5,0.0 116.5,3.0 115.1,3.0 118.1,0.0"/><polygon points="118.0,0.0 120.0,2.0 120.0,0.6 119.4,0.0"/><polygon points="114.0,2.0 115.0,3.0 116.4,3.0 114.0,0.6"/><polygon points="125.5,0.0 122.5,3.0 121.1,3.0 124.1,0.0"/><polygon points="124.0,0.0 126.0,2.0 126.0,0.6 125.4,0.0"/><polygon points="120.0,2.0 121.0,3.0 122.4,3.0 120.0,0.6"/><polygon points="131.5,0.0 128.5,3.0 127.1,3.0 130.1,0.0"/><polygon points="130.0,0.0 132.0,2.0 132.0,0.6 131.4,0.0"/><polygon points="126.0,2.0 127.0,3.0 128.4,3.0 126.0,0.6"/><polygon points="137.5,0.0 134.5,3.0 133.1,3.0 136.1,0.0"/><polygon points="136.0,0.0 138.0,2.0 138.0,0.6 137.4,0.0"/><polygon points="132.0,2.0 133.0,3.0 134.4,3.0 132.0,0.6"/><polygon points="143.5,0.0 140.5,3.0 139.1,3.0 142.1,0.0"/><polygon points="142.0,0.0 144.0,2.0 144.0,0.6 143.4,0.0"/><polygon points="138.0,2.0 139.0,3.0 140.4,3.0 138.0,0.6"/><polygon points="149.5,0.0 146.5,3.0 145.1,3.0 148.1,0.0"/><polygon points="148.0,0.0 150.0,2.0 150.0,0.6 149.4,0.0"/><polygon points="144.0,2.0 145.0,3.0 146.4,3.0 144.0,0.6"/><polygon points="155.5,0.0 152.5,3.0 151.1,3.0 154.1,0.0"/><polygon points="154.0,0.0 156.0,2.0 156.0,0.6 155.4,0.0"/><polygon points="150.0,2.0 151.0,3.0 152.4,3.0 150.0,0.6"/><polygon points="161.5,0.0 158.5,3.0 157.1,3.0 160.1,0.0"/><polygon points="160.0,0.0 162.0,2.0 162.0,0.6 161.4,0.0"/><polygon points="156.0,2.0 157.0,3.0 158.4,3.0 156.0,0.6"/><polygon points="167.5,0.0 164.5,3.0 163.1,3.0 166.1,0.0"/><polygon points="166.0,0.0 168.0,2.0 168.0,0.6 167.4,0.0"/><polygon points="162.0,2.0 163.0,3.0 164.4,3.0 162.0,0.6"/><polygon points="173.5,0.0 170.5,3.0 169.1,3.0 172.1,0.0"/><polygon points="172.0,0.0 174.0,2.0 174.0,0.6 173.4,0.0"/><polygon points="168.0,2.0 169.0,3.0 170.4,3.0 168.0,0.6"/><polygon points="179.5,0.0 176.5,3.0 175.1,3.0 178.1,0.0"/><polygon points="178.0,0.0 180.0,2.0 180.0,0.6 179.4,0.0"/><polygon points="174.0,2.0 175.0,3.0 176.4,3.0 174.0,0.6"/><polygon points="185.5,0.0 182.5,3.0 181.1,3.0 184.1,0.0"/><polygon points="184.0,0.0 186.0,2.0 186.0,0.6 185.4,0.0"/><polygon points="180.0,2.0 181.0,3.0 182.4,3.0 180.0,0.6"/><polygon points="191.5,0.0 188.5,3.0 187.1,3.0 190.1,0.0"/><polygon points="190.0,0.0 192.0,2.0 192.0,0.6 191.4,0.0"/><polygon points="186.0,2.0 187.0,3.0 188.4,3.0 186.0,0.6"/><polygon points="197.5,0.0 194.5,3.0 193.1,3.0 196.1,0.0"/><polygon points="196.0,0.0 198.0,2.0 198.0,0.6 197.4,0.0"/><polygon points="192.0,2.0 193.0,3.0 194.4,3.0 192.0,0.6"/><polygon points="203.5,0.0 200.5,3.0 199.1,3.0 202.1,0.0"/><polygon points="202.0,0.0 204.0,2.0 204.0,0.6 203.4,0.0"/><polygon points="198.0,2.0 199.0,3.0 200.4,3.0 198.0,0.6"/><polygon points="209.5,0.0 206.5,3.0 205.1,3.0 208.1,0.0"/><polygon points="208.0,0.0 210.0,2.0 210.0,0.6 209.4,0.0"/><polygon points="204.0,2.0 205.0,3.0 206.4,3.0 204.0,0.6"/><polygon points="215.5,0.0 212.5,3.0 211.1,3.0 214.1,0.0"/><polygon points="214.0,0.0 216.0,2.0 216.0,0.6 215.4,0.0"/><polygon points="210.0,2.0 211.0,3.0 212.4,3.0 210.0,0.6"/><polygon points="221.5,0.0 218.5,3.0 217.1,3.0 220.1,0.0"/><polygon points="220.0,0.0 222.0,2.0 222.0,0.6 221.4,0.0"/><polygon points="216.0,2.0 217.0,3.0 218.4,3.0 216.0,0.6"/><polygon points="227.5,0.0 224.5,3.0 223.1,3.0 226.1,0.0"/><polygon points="226.0,0.0 228.0,2.0 228.0,0.6 227.4,0.0"/><polygon points="222.0,2.0 223.0,3.0 224.4,3.0 222.0,0.6"/><polygon points="233.5,0.0 230.5,3.0 229.1,3.0 232.1,0.0"/><polygon points="232.0,0.0 234.0,2.0 234.0,0.6 233.4,0.0"/><polygon points="228.0,2.0 229.0,3.0 230.4,3.0 228.0,0.6"/><polygon points="239.5,0.0 236.5,3.0 235.1,3.0 238.1,0.0"/><polygon points="238.0,0.0 240.0,2.0 240.0,0.6 239.4,0.0"/><polygon points="234.0,2.0 235.0,3.0 236.4,3.0 234.0,0.6"/><polygon points="245.5,0.0 242.5,3.0 241.1,3.0 244.1,0.0"/><polygon points="244.0,0.0 246.0,2.0 246.0,0.6 245.4,0.0"/><polygon points="240.0,2.0 241.0,3.0 242.4,3.0 240.0,0.6"/><polygon points="251.5,0.0 248.5,3.0 247.1,3.0 250.1,0.0"/><polygon points="250.0,0.0 252.0,2.0 252.0,0.6 251.4,0.0"/><polygon points="246.0,2.0 247.0,3.0 248.4,3.0 246.0,0.6"/><polygon points="257.5,0.0 254.5,3.0 253.1,3.0 256.1,0.0"/><polygon points="256.0,0.0 258.0,2.0 258.0,0.6 257.4,0.0"/><polygon points="252.0,2.0 253.0,3.0 254.4,3.0 252.0,0.6"/><polygon points="263.5,0.0 260.5,3.0 259.1,3.0 262.1,0.0"/><polygon points="262.0,0.0 264.0,2.0 264.0,0.6 263.4,0.0"/><polygon points="258.0,2.0 259.0,3.0 260.4,3.0 258.0,0.6"/><polygon points="269.5,0.0 266.5,3.0 265.1,3.0 268.1,0.0"/><polygon points="268.0,0.0 270.0,2.0 270.0,0.6 269.4,0.0"/><polygon points="264.0,2.0 265.0,3.0 266.4,3.0 264.0,0.6"/><polygon points="275.5,0.0 272.5,3.0 271.1,3.0 274.1,0.0"/><polygon points="274.0,0.0 276.0,2.0 276.0,0.6 275.4,0.0"/><polygon points="270.0,2.0 271.0,3.0 272.4,3.0 270.0,0.6"/><polygon points="281.5,0.0 278.5,3.0 277.1,3.0 280.1,0.0"/><polygon points="280.0,0.0 282.0,2.0 282.0,0.6 281.4,0.0"/><polygon points="276.0,2.0 277.0,3.0 278.4,3.0 276.0,0.6"/><polygon points="287.5,0.0 284.5,3.0 283.1,3.0 286.1,0.0"/><polygon points="286.0,0.0 288.0,2.0 288.0,0.6 287.4,0.0"/><polygon points="282.0,2.0 283.0,3.0 284.4,3.0 282.0,0.6"/></g></svg><svg class="sq" style="left:68px;top:491px" width="240" height="3"><g fill="#f14c4c"><polygon points="5.5,0.0 2.5,3.0 1.1,3.0 4.1,0.0"/><polygon points="4.0,0.0 6.0,2.0 6.0,0.6 5.4,0.0"/><polygon points="0.0,2.0 1.0,3.0 2.4,3.0 0.0,0.6"/><polygon points="11.5,0.0 8.5,3.0 7.1,3.0 10.1,0.0"/><polygon points="10.0,0.0 12.0,2.0 12.0,0.6 11.4,0.0"/><polygon points="6.0,2.0 7.0,3.0 8.4,3.0 6.0,0.6"/><polygon points="17.5,0.0 14.5,3.0 13.1,3.0 16.1,0.0"/><polygon points="16.0,0.0 18.0,2.0 18.0,0.6 17.4,0.0"/><polygon points="12.0,2.0 13.0,3.0 14.4,3.0 12.0,0.6"/><polygon points="23.5,0.0 20.5,3.0 19.1,3.0 22.1,0.0"/><polygon points="22.0,0.0 24.0,2.0 24.0,0.6 23.4,0.0"/><polygon points="18.0,2.0 19.0,3.0 20.4,3.0 18.0,0.6"/><polygon points="29.5,0.0 26.5,3.0 25.1,3.0 28.1,0.0"/><polygon points="28.0,0.0 30.0,2.0 30.0,0.6 29.4,0.0"/><polygon points="24.0,2.0 25.0,3.0 26.4,3.0 24.0,0.6"/><polygon points="35.5,0.0 32.5,3.0 31.1,3.0 34.1,0.0"/><polygon points="34.0,0.0 36.0,2.0 36.0,0.6 35.4,0.0"/><polygon points="30.0,2.0 31.0,3.0 32.4,3.0 30.0,0.6"/><polygon points="41.5,0.0 38.5,3.0 37.1,3.0 40.1,0.0"/><polygon points="40.0,0.0 42.0,2.0 42.0,0.6 41.4,0.0"/><polygon points="36.0,2.0 37.0,3.0 38.4,3.0 36.0,0.6"/><polygon points="47.5,0.0 44.5,3.0 43.1,3.0 46.1,0.0"/><polygon points="46.0,0.0 48.0,2.0 48.0,0.6 47.4,0.0"/><polygon points="42.0,2.0 43.0,3.0 44.4,3.0 42.0,0.6"/><polygon points="53.5,0.0 50.5,3.0 49.1,3.0 52.1,0.0"/><polygon points="52.0,0.0 54.0,2.0 54.0,0.6 53.4,0.0"/><polygon points="48.0,2.0 49.0,3.0 50.4,3.0 48.0,0.6"/><polygon points="59.5,0.0 56.5,3.0 55.1,3.0 58.1,0.0"/><polygon points="58.0,0.0 60.0,2.0 60.0,0.6 59.4,0.0"/><polygon points="54.0,2.0 55.0,3.0 56.4,3.0 54.0,0.6"/><polygon points="65.5,0.0 62.5,3.0 61.1,3.0 64.1,0.0"/><polygon points="64.0,0.0 66.0,2.0 66.0,0.6 65.4,0.0"/><polygon points="60.0,2.0 61.0,3.0 62.4,3.0 60.0,0.6"/><polygon points="71.5,0.0 68.5,3.0 67.1,3.0 70.1,0.0"/><polygon points="70.0,0.0 72.0,2.0 72.0,0.6 71.4,0.0"/><polygon points="66.0,2.0 67.0,3.0 68.4,3.0 66.0,0.6"/><polygon points="77.5,0.0 74.5,3.0 73.1,3.0 76.1,0.0"/><polygon points="76.0,0.0 78.0,2.0 78.0,0.6 77.4,0.0"/><polygon points="72.0,2.0 73.0,3.0 74.4,3.0 72.0,0.6"/><polygon points="83.5,0.0 80.5,3.0 79.1,3.0 82.1,0.0"/><polygon points="82.0,0.0 84.0,2.0 84.0,0.6 83.4,0.0"/><polygon points="78.0,2.0 79.0,3.0 80.4,3.0 78.0,0.6"/><polygon points="89.5,0.0 86.5,3.0 85.1,3.0 88.1,0.0"/><polygon points="88.0,0.0 90.0,2.0 90.0,0.6 89.4,0.0"/><polygon points="84.0,2.0 85.0,3.0 86.4,3.0 84.0,0.6"/><polygon points="95.5,0.0 92.5,3.0 91.1,3.0 94.1,0.0"/><polygon points="94.0,0.0 96.0,2.0 96.0,0.6 95.4,0.0"/><polygon points="90.0,2.0 91.0,3.0 92.4,3.0 90.0,0.6"/><polygon points="101.5,0.0 98.5,3.0 97.1,3.0 100.1,0.0"/><polygon points="100.0,0.0 102.0,2.0 102.0,0.6 101.4,0.0"/><polygon points="96.0,2.0 97.0,3.0 98.4,3.0 96.0,0.6"/><polygon points="107.5,0.0 104.5,3.0 103.1,3.0 106.1,0.0"/><polygon points="106.0,0.0 108.0,2.0 108.0,0.6 107.4,0.0"/><polygon points="102.0,2.0 103.0,3.0 104.4,3.0 102.0,0.6"/><polygon points="113.5,0.0 110.5,3.0 109.1,3.0 112.1,0.0"/><polygon points="112.0,0.0 114.0,2.0 114.0,0.6 113.4,0.0"/><polygon points="108.0,2.0 109.0,3.0 110.4,3.0 108.0,0.6"/><polygon points="119.5,0.0 116.5,3.0 115.1,3.0 118.1,0.0"/><polygon points="118.0,0.0 120.0,2.0 120.0,0.6 119.4,0.0"/><polygon points="114.0,2.0 115.0,3.0 116.4,3.0 114.0,0.6"/><polygon points="125.5,0.0 122.5,3.0 121.1,3.0 124.1,0.0"/><polygon points="124.0,0.0 126.0,2.0 126.0,0.6 125.4,0.0"/><polygon points="120.0,2.0 121.0,3.0 122.4,3.0 120.0,0.6"/><polygon points="131.5,0.0 128.5,3.0 127.1,3.0 130.1,0.0"/><polygon points="130.0,0.0 132.0,2.0 132.0,0.6 131.4,0.0"/><polygon points="126.0,2.0 127.0,3.0 128.4,3.0 126.0,0.6"/><polygon points="137.5,0.0 134.5,3.0 133.1,3.0 136.1,0.0"/><polygon points="136.0,0.0 138.0,2.0 138.0,0.6 137.4,0.0"/><polygon points="132.0,2.0 133.0,3.0 134.4,3.0 132.0,0.6"/><polygon points="143.5,0.0 140.5,3.0 139.1,3.0 142.1,0.0"/><polygon points="142.0,0.0 144.0,2.0 144.0,0.6 143.4,0.0"/><polygon points="138.0,2.0 139.0,3.0 140.4,3.0 138.0,0.6"/><polygon points="149.5,0.0 146.5,3.0 145.1,3.0 148.1,0.0"/><polygon points="148.0,0.0 150.0,2.0 150.0,0.6 149.4,0.0"/><polygon points="144.0,2.0 145.0,3.0 146.4,3.0 144.0,0.6"/><polygon points="155.5,0.0 152.5,3.0 151.1,3.0 154.1,0.0"/><polygon points="154.0,0.0 156.0,2.0 156.0,0.6 155.4,0.0"/><polygon points="150.0,2.0 151.0,3.0 152.4,3.0 150.0,0.6"/><polygon points="161.5,0.0 158.5,3.0 157.1,3.0 160.1,0.0"/><polygon points="160.0,0.0 162.0,2.0 162.0,0.6 161.4,0.0"/><polygon points="156.0,2.0 157.0,3.0 158.4,3.0 156.0,0.6"/><polygon points="167.5,0.0 164.5,3.0 163.1,3.0 166.1,0.0"/><polygon points="166.0,0.0 168.0,2.0 168.0,0.6 167.4,0.0"/><polygon points="162.0,2.0 163.0,3.0 164.4,3.0 162.0,0.6"/><polygon points="173.5,0.0 170.5,3.0 169.1,3.0 172.1,0.0"/><polygon points="172.0,0.0 174.0,2.0 174.0,0.6 173.4,0.0"/><polygon points="168.0,2.0 169.0,3.0 170.4,3.0 168.0,0.6"/><polygon points="179.5,0.0 176.5,3.0 175.1,3.0 178.1,0.0"/><polygon points="178.0,0.0 180.0,2.0 180.0,0.6 179.4,0.0"/><polygon points="174.0,2.0 175.0,3.0 176.4,3.0 174.0,0.6"/><polygon points="185.5,0.0 182.5,3.0 181.1,3.0 184.1,0.0"/><polygon points="184.0,0.0 186.0,2.0 186.0,0.6 185.4,0.0"/><polygon points="180.0,2.0 181.0,3.0 182.4,3.0 180.0,0.6"/><polygon points="191.5,0.0 188.5,3.0 187.1,3.0 190.1,0.0"/><polygon points="190.0,0.0 192.0,2.0 192.0,0.6 191.4,0.0"/><polygon points="186.0,2.0 187.0,3.0 188.4,3.0 186.0,0.6"/><polygon points="197.5,0.0 194.5,3.0 193.1,3.0 196.1,0.0"/><polygon points="196.0,0.0 198.0,2.0 198.0,0.6 197.4,0.0"/><polygon points="192.0,2.0 193.0,3.0 194.4,3.0 192.0,0.6"/><polygon points="203.5,0.0 200.5,3.0 199.1,3.0 202.1,0.0"/><polygon points="202.0,0.0 204.0,2.0 204.0,0.6 203.4,0.0"/><polygon points="198.0,2.0 199.0,3.0 200.4,3.0 198.0,0.6"/><polygon points="209.5,0.0 206.5,3.0 205.1,3.0 208.1,0.0"/><polygon points="208.0,0.0 210.0,2.0 210.0,0.6 209.4,0.0"/><polygon points="204.0,2.0 205.0,3.0 206.4,3.0 204.0,0.6"/><polygon points="215.5,0.0 212.5,3.0 211.1,3.0 214.1,0.0"/><polygon points="214.0,0.0 216.0,2.0 216.0,0.6 215.4,0.0"/><polygon points="210.0,2.0 211.0,3.0 212.4,3.0 210.0,0.6"/><polygon points="221.5,0.0 218.5,3.0 217.1,3.0 220.1,0.0"/><polygon points="220.0,0.0 222.0,2.0 222.0,0.6 221.4,0.0"/><polygon points="216.0,2.0 217.0,3.0 218.4,3.0 216.0,0.6"/><polygon points="227.5,0.0 224.5,3.0 223.1,3.0 226.1,0.0"/><polygon points="226.0,0.0 228.0,2.0 228.0,0.6 227.4,0.0"/><polygon points="222.0,2.0 223.0,3.0 224.4,3.0 222.0,0.6"/><polygon points="233.5,0.0 230.5,3.0 229.1,3.0 232.1,0.0"/><polygon points="232.0,0.0 234.0,2.0 234.0,0.6 233.4,0.0"/><polygon points="228.0,2.0 229.0,3.0 230.4,3.0 228.0,0.6"/><polygon points="239.5,0.0 236.5,3.0 235.1,3.0 238.1,0.0"/><polygon points="238.0,0.0 240.0,2.0 240.0,0.6 239.4,0.0"/><polygon points="234.0,2.0 235.0,3.0 236.4,3.0 234.0,0.6"/></g></svg><svg class="sq" style="left:68px;top:510px" width="192" height="3"><g fill="#f14c4c"><polygon points="5.5,0.0 2.5,3.0 1.1,3.0 4.1,0.0"/><polygon points="4.0,0.0 6.0,2.0 6.0,0.6 5.4,0.0"/><polygon points="0.0,2.0 1.0,3.0 2.4,3.0 0.0,0.6"/><polygon points="11.5,0.0 8.5,3.0 7.1,3.0 10.1,0.0"/><polygon points="10.0,0.0 12.0,2.0 12.0,0.6 11.4,0.0"/><polygon points="6.0,2.0 7.0,3.0 8.4,3.0 6.0,0.6"/><polygon points="17.5,0.0 14.5,3.0 13.1,3.0 16.1,0.0"/><polygon points="16.0,0.0 18.0,2.0 18.0,0.6 17.4,0.0"/><polygon points="12.0,2.0 13.0,3.0 14.4,3.0 12.0,0.6"/><polygon points="23.5,0.0 20.5,3.0 19.1,3.0 22.1,0.0"/><polygon points="22.0,0.0 24.0,2.0 24.0,0.6 23.4,0.0"/><polygon points="18.0,2.0 19.0,3.0 20.4,3.0 18.0,0.6"/><polygon points="29.5,0.0 26.5,3.0 25.1,3.0 28.1,0.0"/><polygon points="28.0,0.0 30.0,2.0 30.0,0.6 29.4,0.0"/><polygon points="24.0,2.0 25.0,3.0 26.4,3.0 24.0,0.6"/><polygon points="35.5,0.0 32.5,3.0 31.1,3.0 34.1,0.0"/><polygon points="34.0,0.0 36.0,2.0 36.0,0.6 35.4,0.0"/><polygon points="30.0,2.0 31.0,3.0 32.4,3.0 30.0,0.6"/><polygon points="41.5,0.0 38.5,3.0 37.1,3.0 40.1,0.0"/><polygon points="40.0,0.0 42.0,2.0 42.0,0.6 41.4,0.0"/><polygon points="36.0,2.0 37.0,3.0 38.4,3.0 36.0,0.6"/><polygon points="47.5,0.0 44.5,3.0 43.1,3.0 46.1,0.0"/><polygon points="46.0,0.0 48.0,2.0 48.0,0.6 47.4,0.0"/><polygon points="42.0,2.0 43.0,3.0 44.4,3.0 42.0,0.6"/><polygon points="53.5,0.0 50.5,3.0 49.1,3.0 52.1,0.0"/><polygon points="52.0,0.0 54.0,2.0 54.0,0.6 53.4,0.0"/><polygon points="48.0,2.0 49.0,3.0 50.4,3.0 48.0,0.6"/><polygon points="59.5,0.0 56.5,3.0 55.1,3.0 58.1,0.0"/><polygon points="58.0,0.0 60.0,2.0 60.0,0.6 59.4,0.0"/><polygon points="54.0,2.0 55.0,3.0 56.4,3.0 54.0,0.6"/><polygon points="65.5,0.0 62.5,3.0 61.1,3.0 64.1,0.0"/><polygon points="64.0,0.0 66.0,2.0 66.0,0.6 65.4,0.0"/><polygon points="60.0,2.0 61.0,3.0 62.4,3.0 60.0,0.6"/><polygon points="71.5,0.0 68.5,3.0 67.1,3.0 70.1,0.0"/><polygon points="70.0,0.0 72.0,2.0 72.0,0.6 71.4,0.0"/><polygon points="66.0,2.0 67.0,3.0 68.4,3.0 66.0,0.6"/><polygon points="77.5,0.0 74.5,3.0 73.1,3.0 76.1,0.0"/><polygon points="76.0,0.0 78.0,2.0 78.0,0.6 77.4,0.0"/><polygon points="72.0,2.0 73.0,3.0 74.4,3.0 72.0,0.6"/><polygon points="83.5,0.0 80.5,3.0 79.1,3.0 82.1,0.0"/><polygon points="82.0,0.0 84.0,2.0 84.0,0.6 83.4,0.0"/><polygon points="78.0,2.0 79.0,3.0 80.4,3.0 78.0,0.6"/><polygon points="89.5,0.0 86.5,3.0 85.1,3.0 88.1,0.0"/><polygon points="88.0,0.0 90.0,2.0 90.0,0.6 89.4,0.0"/><polygon points="84.0,2.0 85.0,3.0 86.4,3.0 84.0,0.6"/><polygon points="95.5,0.0 92.5,3.0 91.1,3.0 94.1,0.0"/><polygon points="94.0,0.0 96.0,2.0 96.0,0.6 95.4,0.0"/><polygon points="90.0,2.0 91.0,3.0 92.4,3.0 90.0,0.6"/><polygon points="101.5,0.0 98.5,3.0 97.1,3.0 100.1,0.0"/><polygon points="100.0,0.0 102.0,2.0 102.0,0.6 101.4,0.0"/><polygon points="96.0,2.0 97.0,3.0 98.4,3.0 96.0,0.6"/><polygon points="107.5,0.0 104.5,3.0 103.1,3.0 106.1,0.0"/><polygon points="106.0,0.0 108.0,2.0 108.0,0.6 107.4,0.0"/><polygon points="102.0,2.0 103.0,3.0 104.4,3.0 102.0,0.6"/><polygon points="113.5,0.0 110.5,3.0 109.1,3.0 112.1,0.0"/><polygon points="112.0,0.0 114.0,2.0 114.0,0.6 113.4,0.0"/><polygon points="108.0,2.0 109.0,3.0 110.4,3.0 108.0,0.6"/><polygon points="119.5,0.0 116.5,3.0 115.1,3.0 118.1,0.0"/><polygon points="118.0,0.0 120.0,2.0 120.0,0.6 119.4,0.0"/><polygon points="114.0,2.0 115.0,3.0 116.4,3.0 114.0,0.6"/><polygon points="125.5,0.0 122.5,3.0 121.1,3.0 124.1,0.0"/><polygon points="124.0,0.0 126.0,2.0 126.0,0.6 125.4,0.0"/><polygon points="120.0,2.0 121.0,3.0 122.4,3.0 120.0,0.6"/><polygon points="131.5,0.0 128.5,3.0 127.1,3.0 130.1,0.0"/><polygon points="130.0,0.0 132.0,2.0 132.0,0.6 131.4,0.0"/><polygon points="126.0,2.0 127.0,3.0 128.4,3.0 126.0,0.6"/><polygon points="137.5,0.0 134.5,3.0 133.1,3.0 136.1,0.0"/><polygon points="136.0,0.0 138.0,2.0 138.0,0.6 137.4,0.0"/><polygon points="132.0,2.0 133.0,3.0 134.4,3.0 132.0,0.6"/><polygon points="143.5,0.0 140.5,3.0 139.1,3.0 142.1,0.0"/><polygon points="142.0,0.0 144.0,2.0 144.0,0.6 143.4,0.0"/><polygon points="138.0,2.0 139.0,3.0 140.4,3.0 138.0,0.6"/><polygon points="149.5,0.0 146.5,3.0 145.1,3.0 148.1,0.0"/><polygon points="148.0,0.0 150.0,2.0 150.0,0.6 149.4,0.0"/><polygon points="144.0,2.0 145.0,3.0 146.4,3.0 144.0,0.6"/><polygon points="155.5,0.0 152.5,3.0 151.1,3.0 154.1,0.0"/><polygon points="154.0,0.0 156.0,2.0 156.0,0.6 155.4,0.0"/><polygon points="150.0,2.0 151.0,3.0 152.4,3.0 150.0,0.6"/><polygon points="161.5,0.0 158.5,3.0 157.1,3.0 160.1,0.0"/><polygon points="160.0,0.0 162.0,2.0 162.0,0.6 161.4,0.0"/><polygon points="156.0,2.0 157.0,3.0 158.4,3.0 156.0,0.6"/><polygon points="167.5,0.0 164.5,3.0 163.1,3.0 166.1,0.0"/><polygon points="166.0,0.0 168.0,2.0 168.0,0.6 167.4,0.0"/><polygon points="162.0,2.0 163.0,3.0 164.4,3.0 162.0,0.6"/><polygon points="173.5,0.0 170.5,3.0 169.1,3.0 172.1,0.0"/><polygon points="172.0,0.0 174.0,2.0 174.0,0.6 173.4,0.0"/><polygon points="168.0,2.0 169.0,3.0 170.4,3.0 168.0,0.6"/><polygon points="179.5,0.0 176.5,3.0 175.1,3.0 178.1,0.0"/><polygon points="178.0,0.0 180.0,2.0 180.0,0.6 179.4,0.0"/><polygon points="174.0,2.0 175.0,3.0 176.4,3.0 174.0,0.6"/><polygon points="185.5,0.0 182.5,3.0 181.1,3.0 184.1,0.0"/><polygon points="184.0,0.0 186.0,2.0 186.0,0.6 185.4,0.0"/><polygon points="180.0,2.0 181.0,3.0 182.4,3.0 180.0,0.6"/><polygon points="191.5,0.0 188.5,3.0 187.1,3.0 190.1,0.0"/><polygon points="190.0,0.0 192.0,2.0 192.0,0.6 191.4,0.0"/><polygon points="186.0,2.0 187.0,3.0 188.4,3.0 186.0,0.6"/></g></svg>
    <div class="abs" style="left:123px;top:627px;width:2px;height:19px;background:#aeafad"></div>
  </div>
</div>
</body></html>
